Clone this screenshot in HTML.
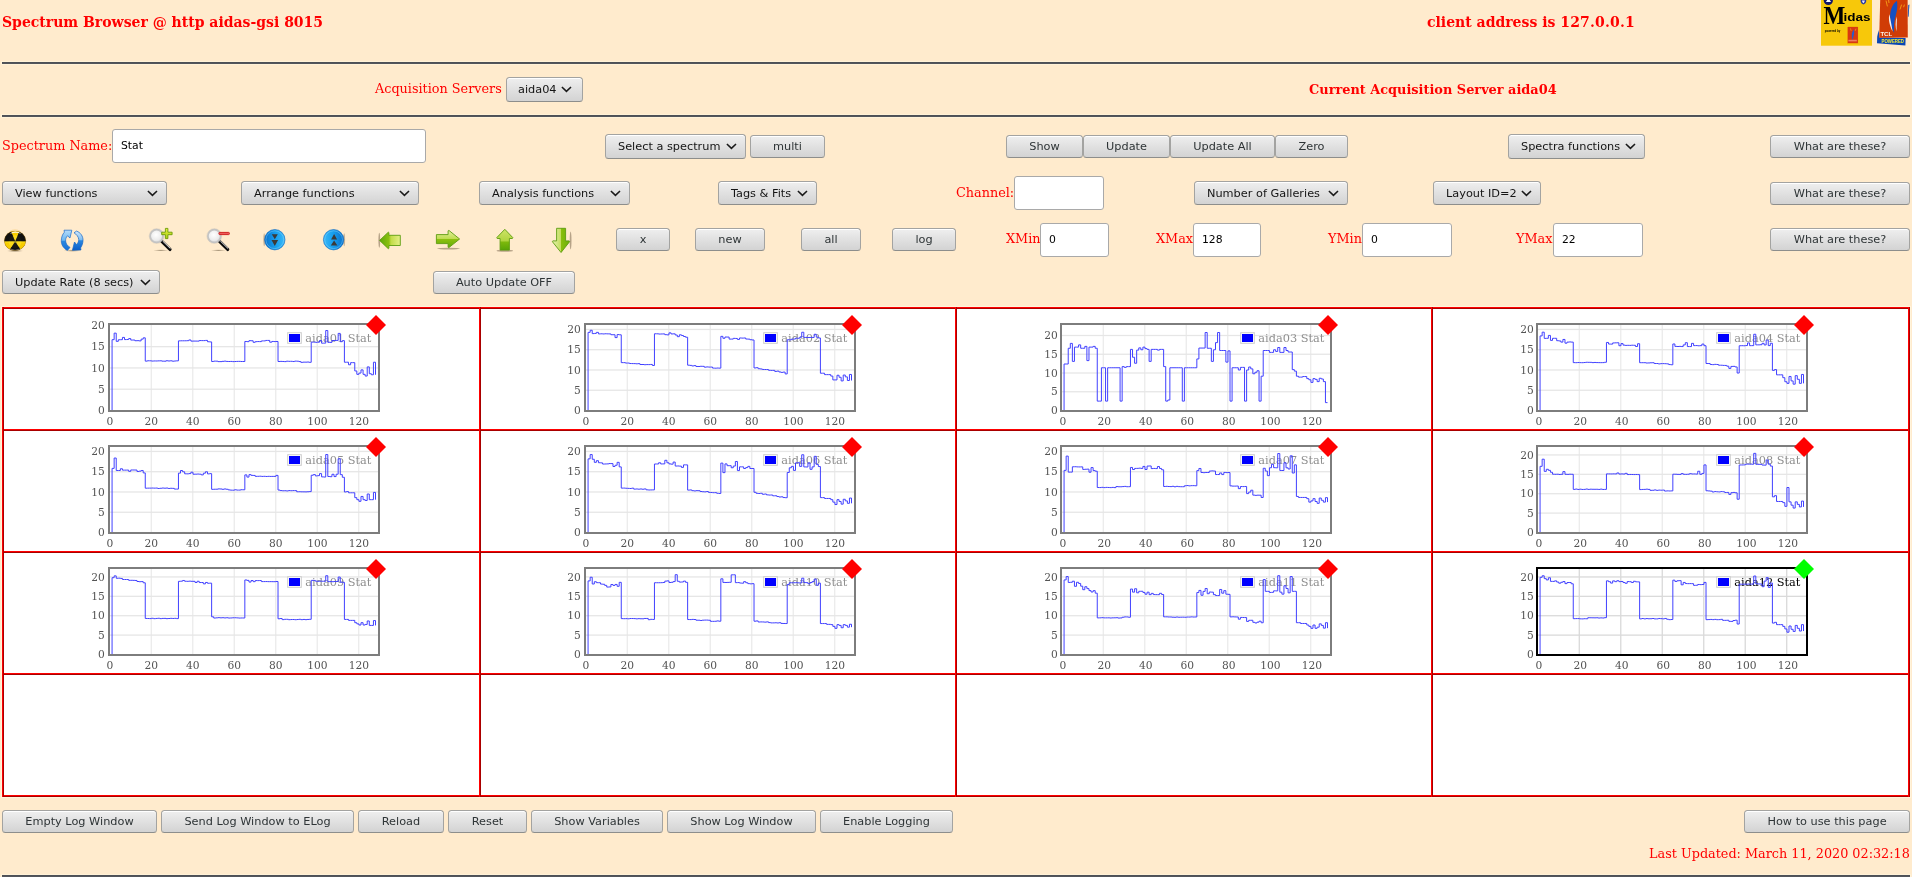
<!DOCTYPE html>
<html><head><meta charset="utf-8"><title>Spectrum Browser</title>
<style>
html,body{margin:0;padding:0}
body{width:1912px;height:877px;overflow:hidden;background:#ffebcd;position:relative;font-family:"DejaVu Serif","Liberation Serif",serif;color:#ff0000;font-size:12.8px}
.a{position:absolute;white-space:nowrap}
.t{position:absolute;white-space:nowrap;line-height:16px;height:16px;will-change:transform}
.h{font-weight:bold;font-size:14px}
.b{font-weight:bold;font-size:12.9px}
.hr{position:absolute;left:2px;width:1908px;height:2px;background:linear-gradient(#4b4e53,#55585e);box-shadow:0 0 0 1px #fff2d8}
.btn,.sel{position:absolute;box-sizing:border-box;border:1px solid #a3a3a1;border-bottom-color:#8d8e8c;border-radius:3.5px;background:linear-gradient(#efefef,#e2e2e2 45%,#d3d3d3);box-shadow:inset 0 1px 0 #ffffff;font-family:"DejaVu Sans","Liberation Sans",sans-serif;font-size:11.3px;text-align:center;white-space:nowrap}
.btn{color:#2e3436}
.sel{color:#141414;text-align:left;font-size:11.3px}
.btn span,.sel span{position:absolute;left:0;right:0;top:50%;margin-top:-8px;line-height:16px;height:16px;will-change:transform}
.sel span{left:12px}
.sel svg{position:absolute;top:50%;margin-top:-3.5px}
.inp{position:absolute;box-sizing:border-box;border:1px solid #a9a9a9;border-radius:3px;background:#fff;font-family:"DejaVu Sans","Liberation Sans",sans-serif;font-size:10.8px;color:#000}
.inp span{position:absolute;left:8px;top:50%;margin-top:-8px;line-height:16px;will-change:transform}
.grid{position:absolute;left:2px;top:307px;width:1908px;height:490px;background:#fff}
.vl{position:absolute;top:307px;height:490px;width:2px;background:linear-gradient(90deg,#ff0000 50%,#a80000 50%)}
.hl{position:absolute;left:2px;width:1908px;height:2px;background:linear-gradient(#ff0000 50%,#a80000 50%)}
svg text{font-family:"DejaVu Serif","Liberation Serif",serif}
svg.a{will-change:transform}
</style></head>
<body>
<div class="t h" style="left:2px;top:13.70px">Spectrum Browser @ http aidas-gsi 8015</div>
<div class="t h" style="left:1427px;top:13.70px">client address is <span style="letter-spacing:.18px">127.0.0.1</span></div>
<svg class="a" style="left:1816px;top:0" width="96" height="48" viewBox="1816 0 96 48"><rect x="1821" y="0" width="51" height="45.7" fill="#f7c80a"/><circle cx="1828.3" cy="0.4" r="4.6" fill="#14186a"/><path d="M1825.9 2 L1828.5 -2 L1831 2 Z" fill="#fff"/><path d="M1860.6 0 h5.6 q0.4 3.2 -2.8 4.6 q-3.2 -1.4 -2.8 -4.6Z" fill="#2a3aa0"/><path d="M1862 0.6 h2.8 q0 1.8 -1.4 2.6 q-1.4 -0.8 -1.4 -2.6Z" fill="#e8e8f8"/><text x="1823.4" y="23.6" style="font-family:'Liberation Serif','DejaVu Serif',serif"  font-weight="bold" font-size="25.4" fill="#000" textLength="21.8" lengthAdjust="spacingAndGlyphs">M</text><text x="1843.5" y="20.6" style="font-family:'Liberation Sans','DejaVu Sans',sans-serif"  font-weight="bold" font-size="10.5" fill="#000" textLength="27" lengthAdjust="spacingAndGlyphs">idas</text><text x="1824.8" y="31.8" style="font-family:'Liberation Sans','DejaVu Sans',sans-serif"  font-weight="bold" font-size="3.4" fill="#000" textLength="15.5" lengthAdjust="spacingAndGlyphs">powered by</text><rect x="1847.2" y="26.6" width="11" height="17" fill="#d83a10" stroke="#f8e000" stroke-width="0.5"/><path d="M1853.6 29.4 q-2.2 3 -1.8 7.4 q0.2 2 1 3.4 q0.2 -3 1.2 -5.6 q0.8 -2.6 -0.4 -5.2Z" fill="#2a5ac8"/><path d="M1850.4 28.4 l0.8 2.4 M1856 28.6 l-0.8 2.2" stroke="#f8b020" stroke-width="0.6"/><rect x="1848.4" y="39.8" width="8.4" height="1.6" fill="#f08060"/><path d="M1877.2 36.8 L1878.6 30 L1879.4 37.6 L1905.6 38 L1905.4 45.4 L1877 43.2 Z" fill="#0a46b4"/><path d="M1880.2 0 L1907.6 0 L1907.8 37.6 L1879.2 37.8 Z" fill="#d03c06"/><path d="M1908.3 5 L1909.4 4.4 L1908.6 16.6 L1907.9 17 Z" fill="#0a46b4"/><path d="M1897 0.8 C1891.8 4.4 1889.6 11.6 1890.2 19.6 C1890.4 25.2 1892.6 29.4 1894.2 33.2 C1893.6 26 1894.2 20.4 1896 14.4 C1897.4 10 1897.6 5.2 1897 0.8 Z" fill="#1450c4"/><path d="M1889.4 14.2 C1888.2 19 1889.4 25 1892.6 31.6 L1891.4 24.6 Z M1896.6 16.4 C1895.2 21.4 1895.4 27.6 1896.6 31.6 C1896.4 26 1897.2 20.6 1896.6 16.4Z" fill="#f4f0f0"/><path d="M1886 0.6 L1887.4 6.4 M1888.6 0 L1889 3 M1901.6 4.6 L1900 9.4 M1904.4 4.6 L1903.6 7.2" stroke="#f6a018" stroke-width="0.9" fill="none"/><text x="1880.4" y="35.6" style="font-family:'Liberation Sans','DejaVu Sans',sans-serif"  font-weight="bold" font-size="5.2" fill="#fcf4ec" textLength="11.8" lengthAdjust="spacingAndGlyphs">TCL</text><text x="1881.6" y="43.2" style="font-family:'Liberation Sans','DejaVu Sans',sans-serif"  font-weight="bold" font-size="4.6" fill="#f4ec30" textLength="22.4" lengthAdjust="spacingAndGlyphs">POWERED</text></svg>
<div class="hr" style="top:62px"></div>
<div class="t " style="left:375px;top:81.20px">Acquisition Servers</div>
<div class="sel" style="left:506px;top:77px;width:77px;height:25px"><span style="margin-top:-8px;left:11px">aida04</span><svg style="left:54.300000000000004px;margin-top:-3.5px" width="11" height="7" viewBox="0 0 11 7"><path d="M0.9 1 L5.45 5.4 L10 1" fill="none" stroke="#1a1a1a" stroke-width="1.55"/></svg></div>
<div class="t b" style="left:1309.2px;top:81.70px">Current Acquisition Server aida04</div>
<div class="hr" style="top:115px"></div>
<div class="t " style="left:2px;top:137.70px">Spectrum Name:</div>
<div class="inp" style="left:112px;top:129px;width:314px;height:34px"><span>Stat</span></div>
<div class="sel" style="left:605px;top:134px;width:141px;height:25px"><span style="margin-top:-8px;left:12px">Select a spectrum</span><svg style="left:119.7px;margin-top:-3.5px" width="11" height="7" viewBox="0 0 11 7"><path d="M0.9 1 L5.45 5.4 L10 1" fill="none" stroke="#1a1a1a" stroke-width="1.55"/></svg></div>
<div class="btn" style="left:750px;top:135px;width:75px;height:23px"><span>multi</span></div>
<div class="btn" style="left:1006px;top:135px;width:77px;height:23px"><span>Show</span></div>
<div class="btn" style="left:1083px;top:135px;width:87px;height:23px"><span>Update</span></div>
<div class="btn" style="left:1170px;top:135px;width:105px;height:23px"><span>Update All</span></div>
<div class="btn" style="left:1275px;top:135px;width:73px;height:23px"><span>Zero</span></div>
<div class="sel" style="left:1508px;top:134px;width:137px;height:25px"><span style="margin-top:-8px;left:12px">Spectra functions</span><svg style="left:115.7px;margin-top:-3.5px" width="11" height="7" viewBox="0 0 11 7"><path d="M0.9 1 L5.45 5.4 L10 1" fill="none" stroke="#1a1a1a" stroke-width="1.55"/></svg></div>
<div class="btn" style="left:1770px;top:135px;width:140px;height:23px"><span>What are these?</span></div>
<div class="sel" style="left:2px;top:181px;width:165px;height:24px"><span style="margin-top:-7px;left:12px">View functions</span><svg style="left:143.7px;margin-top:-3.0px" width="11" height="7" viewBox="0 0 11 7"><path d="M0.9 1 L5.45 5.4 L10 1" fill="none" stroke="#1a1a1a" stroke-width="1.55"/></svg></div>
<div class="sel" style="left:241px;top:181px;width:178px;height:24px"><span style="margin-top:-7px;left:12px">Arrange functions</span><svg style="left:156.7px;margin-top:-3.0px" width="11" height="7" viewBox="0 0 11 7"><path d="M0.9 1 L5.45 5.4 L10 1" fill="none" stroke="#1a1a1a" stroke-width="1.55"/></svg></div>
<div class="sel" style="left:479px;top:181px;width:151px;height:24px"><span style="margin-top:-7px;left:12px">Analysis functions</span><svg style="left:129.7px;margin-top:-3.0px" width="11" height="7" viewBox="0 0 11 7"><path d="M0.9 1 L5.45 5.4 L10 1" fill="none" stroke="#1a1a1a" stroke-width="1.55"/></svg></div>
<div class="sel" style="left:718px;top:181px;width:99px;height:24px"><span style="margin-top:-7px;left:12px">Tags &amp; Fits</span><svg style="left:77.7px;margin-top:-3.0px" width="11" height="7" viewBox="0 0 11 7"><path d="M0.9 1 L5.45 5.4 L10 1" fill="none" stroke="#1a1a1a" stroke-width="1.55"/></svg></div>
<div class="t " style="left:956px;top:184.70px">Channel:</div>
<div class="inp" style="left:1014px;top:176px;width:90px;height:34px"><span></span></div>
<div class="sel" style="left:1194px;top:181px;width:154px;height:24px"><span style="margin-top:-7px;left:12px">Number of Galleries</span><svg style="left:132.7px;margin-top:-3.0px" width="11" height="7" viewBox="0 0 11 7"><path d="M0.9 1 L5.45 5.4 L10 1" fill="none" stroke="#1a1a1a" stroke-width="1.55"/></svg></div>
<div class="sel" style="left:1433px;top:181px;width:108px;height:24px"><span style="margin-top:-7px;left:12px">Layout ID=2</span><svg style="left:86.7px;margin-top:-3.0px" width="11" height="7" viewBox="0 0 11 7"><path d="M0.9 1 L5.45 5.4 L10 1" fill="none" stroke="#1a1a1a" stroke-width="1.55"/></svg></div>
<div class="btn" style="left:1770px;top:182px;width:140px;height:23px"><span>What are these?</span></div>
<svg class="a" style="left:0;top:224px" width="582" height="36" viewBox="0 224 582 36"><defs>
<radialGradient id="gy" cx="0.5" cy="0.45" r="0.6"><stop offset="0" stop-color="#ffe53a"/><stop offset="0.6" stop-color="#f5c400"/><stop offset="1" stop-color="#d89a00"/></radialGradient>
<radialGradient id="gk" cx="0.5" cy="0.5" r="0.55"><stop offset="0" stop-color="#3a3a30"/><stop offset="0.7" stop-color="#0c0c0c"/><stop offset="1" stop-color="#000"/></radialGradient>
<linearGradient id="gshine" x1="0" y1="0" x2="0" y2="1"><stop offset="0" stop-color="#fff" stop-opacity="0.75"/><stop offset="1" stop-color="#fff" stop-opacity="0"/></linearGradient>
<radialGradient id="gsh" cx="0.5" cy="0.5" r="0.5"><stop offset="0" stop-color="#3a2a10" stop-opacity="0.45"/><stop offset="1" stop-color="#3a2a10" stop-opacity="0"/></radialGradient>
<linearGradient id="gb1" x1="0" y1="0" x2="0" y2="1"><stop offset="0" stop-color="#b4dcfa"/><stop offset="0.5" stop-color="#6cb6f0"/><stop offset="0.54" stop-color="#2a88e0"/><stop offset="1" stop-color="#1a70d4"/></linearGradient>
<linearGradient id="gb2" x1="0" y1="0" x2="0" y2="1"><stop offset="0" stop-color="#d0e8fc"/><stop offset="0.46" stop-color="#7cbcf2"/><stop offset="0.5" stop-color="#2a88e0"/><stop offset="1" stop-color="#0a5cc8"/></linearGradient>
<radialGradient id="glens" cx="0.45" cy="0.4" r="0.6"><stop offset="0" stop-color="#ffffff"/><stop offset="0.7" stop-color="#ececec"/><stop offset="1" stop-color="#d6d6d6"/></radialGradient>
<linearGradient id="gcd" x1="0" y1="0" x2="1" y2="0"><stop offset="0" stop-color="#0870cc"/><stop offset="0.55" stop-color="#18a0ee"/><stop offset="1" stop-color="#3ab8f8"/></linearGradient>
<linearGradient id="gcu" x1="0" y1="0" x2="1" y2="0"><stop offset="0" stop-color="#3ab8f8"/><stop offset="0.45" stop-color="#18a0ee"/><stop offset="1" stop-color="#0870cc"/></linearGradient>
<linearGradient id="gal" x1="0" y1="0" x2="1" y2="0"><stop offset="0" stop-color="#5ea808"/><stop offset="0.45" stop-color="#8cc010"/><stop offset="0.55" stop-color="#c2dc48"/><stop offset="1" stop-color="#e4f088"/></linearGradient>
<linearGradient id="gar" x1="0" y1="0" x2="0" y2="1"><stop offset="0" stop-color="#e2f0a0"/><stop offset="0.48" stop-color="#c0dc50"/><stop offset="0.52" stop-color="#8cc010"/><stop offset="1" stop-color="#62aa08"/></linearGradient>
<linearGradient id="gau" x1="0" y1="0" x2="0" y2="1"><stop offset="0" stop-color="#cfe468"/><stop offset="0.55" stop-color="#b0d440"/><stop offset="0.62" stop-color="#7cb80c"/><stop offset="1" stop-color="#58a406"/></linearGradient>
<linearGradient id="gad" x1="0" y1="0" x2="1" y2="0"><stop offset="0" stop-color="#e6f2b0"/><stop offset="0.48" stop-color="#c4de60"/><stop offset="0.52" stop-color="#88be0c"/><stop offset="1" stop-color="#6cb008"/></linearGradient>
<linearGradient id="gplus" x1="0" y1="0" x2="0" y2="1"><stop offset="0" stop-color="#e8f040"/><stop offset="1" stop-color="#a8cc10"/></linearGradient>
</defs><clipPath id="radclip"><ellipse cx="15.05" cy="240.75" rx="10.7" ry="9.85"/></clipPath><ellipse cx="15.05" cy="250.95" rx="8.6" ry="1.3" fill="url(#gsh)"/><g clip-path="url(#radclip)"><rect x="4" y="229" width="23" height="23" fill="#0e0e0c"/><ellipse cx="15.05" cy="239.75" rx="8" ry="6" fill="#34342a" opacity="0.6"/><path d="M15.2 241.5 L26.92 213.88 L15.20 211.50 L3.48 213.88 Z" fill="#f7cc00"/><path d="M15.2 241.5 L-14.80 241.50 L-11.16 255.81 L-1.14 266.66 Z" fill="#f7cc00"/><path d="M15.2 241.5 L31.54 266.66 L41.56 255.81 L45.20 241.50 Z" fill="#f7cc00"/><ellipse cx="15.05" cy="241.75" rx="6.5" ry="6.5" fill="#ffe838" opacity="0.5"/><path d="M15.2 241.5 L26.92 213.88 L15.20 211.50 L3.48 213.88 Z" fill="none"/><path d="M15.2 241.5 L45.20 241.50 L40.22 224.94 L26.92 213.88 Z" fill="#101010" opacity="0.93"/><path d="M15.2 241.5 L3.48 213.88 L-9.82 224.94 L-14.80 241.50 Z" fill="#101010" opacity="0.93"/><path d="M15.2 241.5 L-1.14 266.66 L15.20 271.50 L31.54 266.66 Z" fill="#101010" opacity="0.93"/><rect x="4.050000000000001" y="241.45" width="22" height="1.0" fill="#ffe21a" opacity="0.95"/><path d="M13.799999999999999 241.5 h2.8 v1.0 h-2.8 Z" fill="#5a5a3a" opacity="0.7"/><path d="M9.8 234.0 A7.25 7.25 0 0 1 21.3 234.0 A14 14 0 0 0 9.8 234.0Z" fill="#fff" opacity="0.85"/><path d="M10.05 248.95 A9.6 9.2 0 0 0 20.05 248.95" fill="none" stroke="#c8c8d0" stroke-opacity="0.5" stroke-width="0.9"/></g><ellipse cx="15.05" cy="240.75" rx="10.7" ry="9.85" fill="none" stroke="#c88a00" stroke-opacity="0.5" stroke-width="0.6"/><path d="M9.6 231.5 A10.6 10.6 0 0 1 20.6 231.5" fill="none" stroke="#f0b020" stroke-opacity="0.55" stroke-width="0.5"/><ellipse cx="72.5" cy="250.6" rx="9" ry="1.3" fill="url(#gsh)"/><path d="M64.0 230.2 L71.8 230.2 L70.0 238.0 L67.5 235.8 C65.9 237.4 65.5 239.4 65.6 241.0 C65.8 243.8 67.6 246.0 70.0 247.4 L67.4 250.4 C63.6 248.4 61.2 244.8 61.3 240.7 C61.4 237.2 62.4 234.4 64.4 232.2 Z" fill="url(#gb1)" stroke="#1868c8" stroke-width="0.7" stroke-linejoin="round"/><path d="M76.5 231.1 C80.5 232.4 83.1 236.2 83.0 240.4 C82.9 243.4 82.0 245.8 80.6 247.9 L81.0 249.9 L72.4 250.3 L74.5 242.0 L76.4 244.5 C78.0 243.2 78.8 241.4 78.75 239.7 C78.6 236.8 76.6 234.4 74.0 232.8 Z" fill="url(#gb2)" stroke="#1464c4" stroke-width="0.7" stroke-linejoin="round"/><ellipse cx="160.79999999999998" cy="250.4" rx="7.5" ry="1.1" fill="url(#gsh)"/><path d="M161.79999999999998 241.45000000000002 L170.0 249.45000000000002" stroke="#0a0a0a" stroke-width="3.2" stroke-linecap="round"/><path d="M162.9 241.25 L170.2 248.35000000000002" stroke="#f4f4f4" stroke-width="1.0" stroke-linecap="round"/><circle cx="156.6" cy="236.05" r="6.4" fill="url(#glens)" stroke="#c4c4c4" stroke-width="1.7"/><circle cx="156.6" cy="236.05" r="7.4" fill="none" stroke="#b0b0b0" stroke-opacity="0.6" stroke-width="0.5"/><path d="M165.4 228.4 h2.5 v3.8 h4.2 v2.5 h-4.2 v3.9 h-2.5 v-3.9 h-3.7 v-2.5 h3.7 Z" fill="url(#gplus)" stroke="#6a9c08" stroke-width="0.9" stroke-linejoin="round"/><ellipse cx="218.5" cy="250.4" rx="7.5" ry="1.1" fill="url(#gsh)"/><path d="M219.5 241.45000000000002 L227.70000000000002 249.45000000000002" stroke="#0a0a0a" stroke-width="3.2" stroke-linecap="round"/><path d="M220.60000000000002 241.25 L227.9 248.35000000000002" stroke="#f4f4f4" stroke-width="1.0" stroke-linecap="round"/><circle cx="214.3" cy="236.05" r="6.4" fill="url(#glens)" stroke="#c4c4c4" stroke-width="1.7"/><circle cx="214.3" cy="236.05" r="7.4" fill="none" stroke="#b0b0b0" stroke-opacity="0.6" stroke-width="0.5"/><rect x="218.9" y="232.4" width="10.5" height="2.2" rx="0.8" fill="#ee5a5a" stroke="#cc1414" stroke-width="0.9"/><ellipse cx="264.2" cy="239.7" rx="0.9" ry="6.5" fill="#4a3820" fill-opacity="0.32"/><circle cx="274.8" cy="239.7" r="10.2" fill="url(#gcd)" stroke="#0a64c0" stroke-width="0.6"/><circle cx="274.8" cy="239.7" r="8.9" fill="none" stroke="#8edcff" stroke-opacity="0.6" stroke-width="0.7"/><path d="M271.8 234.29999999999998 h6 l-3 4.9 Z M271.5 240.0 h6.6 l-3.3 6.1 Z" fill="#3c3a38"/><ellipse cx="344.20000000000005" cy="239.7" rx="0.9" ry="6.5" fill="#4a3820" fill-opacity="0.32"/><circle cx="333.6" cy="239.7" r="10.2" fill="url(#gcu)" stroke="#0a64c0" stroke-width="0.6"/><circle cx="333.6" cy="239.7" r="8.9" fill="none" stroke="#8edcff" stroke-opacity="0.6" stroke-width="0.7"/><path d="M334.1 234.0 l3 5.6 h-6 Z M334.1 240.6 l3.3 5 h-6.6 Z" fill="#3c3a38"/><ellipse cx="379.3" cy="240.3" rx="0.9" ry="7.5" fill="#4a3820" fill-opacity="0.4"/><path d="M379.6 240.4 L388.3 232.2 L388.9 232.6 L388.9 235.3 L400.3 235.3 L400.3 245.5 L388.9 245.5 L388.9 248.3 L388.3 248.7 Z" fill="url(#gal)" stroke="#5c9c10" stroke-width="0.9" stroke-linejoin="round"/><ellipse cx="448.5" cy="248.6" rx="11.5" ry="0.9" fill="#4a3820" fill-opacity="0.4"/><path d="M459.6 239.0 L448.9 230.4 L448.1 230.8 L448.1 234.6 L436.4 234.6 L436.4 243.6 L448.1 243.6 L448.1 247.2 L448.9 247.6 Z" fill="url(#gar)" stroke="#5c9c10" stroke-width="0.9" stroke-linejoin="round"/><ellipse cx="504.8" cy="250.7" rx="8.3" ry="1.0" fill="#4a3820" fill-opacity="0.4"/><path d="M504.8 229.3 L496.8 237.6 L497.2 238.5 L500.1 238.5 L500.1 250.1 L509.4 250.1 L509.4 238.5 L512.4 238.5 L512.8 237.6 Z" fill="url(#gau)" stroke="#5c9c10" stroke-width="0.9" stroke-linejoin="round"/><ellipse cx="570.6" cy="240.5" rx="0.9" ry="9" fill="#4a3820" fill-opacity="0.4"/><path d="M561.05 252.5 L552.4 241.7 L552.8 240.9 L556.6 240.9 L556.6 228.3 L565.6 228.3 L565.6 240.9 L569.2 240.9 L569.6 241.7 Z" fill="url(#gad)" stroke="#5c9c10" stroke-width="0.9" stroke-linejoin="round"/></svg>
<div class="btn" style="left:616px;top:228px;width:54px;height:23px"><span>x</span></div>
<div class="btn" style="left:695px;top:228px;width:70px;height:23px"><span>new</span></div>
<div class="btn" style="left:801px;top:228px;width:60px;height:23px"><span>all</span></div>
<div class="btn" style="left:892px;top:228px;width:64px;height:23px"><span>log</span></div>
<div class="t " style="left:1006px;top:231.20px">XMin</div>
<div class="inp" style="left:1040px;top:223px;width:69px;height:34px"><span>0</span></div>
<div class="t " style="left:1156px;top:231.20px">XMax</div>
<div class="inp" style="left:1193px;top:223px;width:68px;height:34px"><span>128</span></div>
<div class="t " style="left:1328px;top:231.20px">YMin</div>
<div class="inp" style="left:1362px;top:223px;width:90px;height:34px"><span>0</span></div>
<div class="t " style="left:1516px;top:231.20px">YMax</div>
<div class="inp" style="left:1553px;top:223px;width:90px;height:34px"><span>22</span></div>
<div class="btn" style="left:1770px;top:228px;width:140px;height:23px"><span>What are these?</span></div>
<div class="sel" style="left:2px;top:270px;width:158px;height:24px"><span style="margin-top:-7px;left:12px">Update Rate (8 secs)</span><svg style="left:136.7px;margin-top:-3.0px" width="11" height="7" viewBox="0 0 11 7"><path d="M0.9 1 L5.45 5.4 L10 1" fill="none" stroke="#1a1a1a" stroke-width="1.55"/></svg></div>
<div class="btn" style="left:433px;top:271px;width:142px;height:23px"><span>Auto Update OFF</span></div>
<div class="grid"></div>
<div class="a" style="left:1px;top:306px;width:1908px;height:490px;border:1px solid #fff4dc"></div>
<div class="hl" style="top:307px"></div>
<div class="hl" style="top:429px"></div>
<div class="hl" style="top:551px"></div>
<div class="hl" style="top:673px"></div>
<div class="hl" style="top:795px"></div>
<div class="vl" style="left:2px"></div>
<div class="vl" style="left:479px"></div>
<div class="vl" style="left:955px"></div>
<div class="vl" style="left:1431px"></div>
<div class="vl" style="left:1908px"></div>
<svg class="a" style="left:80px;top:311px" width="312" height="119" viewBox="80 311 312 119"><rect x="150.64" y="325" width="1.3" height="85.0" fill="#ebebeb"/><rect x="192.12" y="325" width="1.3" height="85.0" fill="#ebebeb"/><rect x="233.61" y="325" width="1.3" height="85.0" fill="#ebebeb"/><rect x="275.09" y="325" width="1.3" height="85.0" fill="#ebebeb"/><rect x="316.58" y="325" width="1.3" height="85.0" fill="#ebebeb"/><rect x="358.07" y="325" width="1.3" height="85.0" fill="#ebebeb"/><rect x="110" y="388.58" width="268.0" height="1.3" fill="#e6e6e6"/><rect x="110" y="367.31" width="268.0" height="1.3" fill="#e6e6e6"/><rect x="110" y="346.04" width="268.0" height="1.3" fill="#e6e6e6"/><rect x="287.70" y="332.70" width="13.6" height="10.6" fill="#fff" stroke="#ccc" stroke-width="1"/><rect x="289.00" y="334.00" width="11" height="8" fill="#0000ff"/><text x="371.40" y="341.60" font-size="11.35" fill="#8f8f8f" text-anchor="end">aida01 Stat</text><path d="M110.00 410.50 L112.07 410.50 L112.07 339.68 L114.15 339.68 L114.15 333.15 L116.22 333.15 L116.22 341.34 L118.30 341.34 L118.30 339.75 L120.37 339.75 L120.37 339.68 L122.45 339.68 L122.45 337.41 L124.52 337.41 L124.52 339.59 L126.59 339.59 L126.59 339.52 L128.67 339.52 L128.67 338.56 L130.74 338.56 L130.74 340.05 L132.82 340.05 L132.82 340.03 L134.89 340.03 L134.89 340.73 L136.97 340.73 L136.97 340.68 L139.04 340.68 L139.04 340.88 L141.11 340.88 L141.11 339.13 L143.19 339.13 L143.19 337.83 L145.26 337.83 L145.26 361.13 L147.34 361.13 L147.34 360.77 L149.41 360.77 L149.41 360.81 L151.49 360.81 L151.49 361.07 L153.56 361.07 L153.56 360.95 L155.63 360.95 L155.63 360.97 L157.71 360.97 L157.71 360.87 L159.78 360.87 L159.78 360.80 L161.86 360.80 L161.86 361.15 L163.93 361.15 L163.93 361.18 L166.01 361.18 L166.01 360.77 L168.08 360.77 L168.08 360.98 L170.15 360.98 L170.15 360.81 L172.23 360.81 L172.23 361.20 L174.30 361.20 L174.30 360.97 L176.38 360.97 L176.38 360.83 L178.45 360.83 L178.45 340.87 L180.53 340.87 L180.53 340.79 L182.60 340.79 L182.60 340.79 L184.67 340.79 L184.67 340.78 L186.75 340.78 L186.75 340.70 L188.82 340.70 L188.82 339.96 L190.90 339.96 L190.90 341.11 L192.97 341.11 L192.97 341.07 L195.05 341.07 L195.05 341.08 L197.12 341.08 L197.12 341.12 L199.20 341.12 L199.20 340.55 L201.27 340.55 L201.27 340.61 L203.34 340.61 L203.34 340.60 L205.42 340.60 L205.42 340.40 L207.49 340.40 L207.49 341.74 L209.57 341.74 L209.57 341.92 L211.64 341.92 L211.64 361.51 L213.72 361.51 L213.72 361.14 L215.79 361.14 L215.79 361.16 L217.86 361.16 L217.86 361.61 L219.94 361.61 L219.94 361.61 L222.01 361.61 L222.01 361.35 L224.09 361.35 L224.09 361.15 L226.16 361.15 L226.16 361.43 L228.24 361.43 L228.24 361.51 L230.31 361.51 L230.31 361.41 L232.38 361.41 L232.38 361.61 L234.46 361.61 L234.46 361.51 L236.53 361.51 L236.53 361.40 L238.61 361.40 L238.61 361.37 L240.68 361.37 L240.68 361.51 L242.76 361.51 L242.76 361.51 L244.83 361.51 L244.83 341.47 L246.90 341.47 L246.90 341.66 L248.98 341.66 L248.98 340.68 L251.05 340.68 L251.05 340.75 L253.13 340.75 L253.13 342.30 L255.20 342.30 L255.20 341.68 L257.28 341.68 L257.28 341.57 L259.35 341.57 L259.35 341.62 L261.42 341.62 L261.42 340.91 L263.50 340.91 L263.50 340.89 L265.57 340.89 L265.57 340.43 L267.65 340.43 L267.65 340.42 L269.72 340.42 L269.72 342.19 L271.80 342.19 L271.80 341.45 L273.87 341.45 L273.87 341.59 L275.94 341.59 L275.94 341.47 L278.02 341.47 L278.02 361.51 L280.09 361.51 L280.09 361.39 L282.17 361.39 L282.17 361.48 L284.24 361.48 L284.24 361.61 L286.32 361.61 L286.32 361.20 L288.39 361.20 L288.39 361.34 L290.46 361.34 L290.46 361.30 L292.54 361.30 L292.54 361.53 L294.61 361.53 L294.61 361.12 L296.69 361.12 L296.69 361.19 L298.76 361.19 L298.76 361.56 L300.84 361.56 L300.84 362.35 L302.91 362.35 L302.91 362.15 L304.98 362.15 L304.98 362.15 L307.06 362.15 L307.06 362.04 L309.13 362.04 L309.13 362.30 L311.21 362.30 L311.21 342.13 L313.28 342.13 L313.28 342.13 L315.36 342.13 L315.36 342.34 L317.43 342.34 L317.43 342.21 L319.50 342.21 L319.50 340.52 L321.58 340.52 L321.58 343.20 L323.65 343.20 L323.65 343.12 L325.73 343.12 L325.73 330.52 L327.80 330.52 L327.80 342.37 L329.88 342.37 L329.88 342.37 L331.95 342.37 L331.95 340.50 L334.02 340.50 L334.02 340.55 L336.10 340.55 L336.10 340.38 L338.17 340.38 L338.17 333.40 L340.25 333.40 L340.25 341.70 L342.32 341.70 L342.32 340.65 L344.40 340.65 L344.40 362.22 L346.47 362.22 L346.47 362.22 L348.54 362.22 L348.54 364.77 L350.62 364.77 L350.62 362.65 L352.69 362.65 L352.69 362.65 L354.77 362.65 L354.77 370.94 L356.84 370.94 L356.84 374.34 L358.92 374.34 L358.92 373.07 L360.99 373.07 L360.99 369.88 L363.07 369.88 L363.07 374.34 L365.14 374.34 L365.14 376.04 L367.21 376.04 L367.21 366.90 L369.29 366.90 L369.29 373.71 L371.36 373.71 L371.36 374.77 L373.44 374.77 L373.44 362.22 L375.51 362.22 L375.51 374.77" fill="none" stroke="#4040ff" stroke-width="1.0" stroke-linejoin="round"/><rect x="109" y="324" width="270.0" height="87.0" fill="none" stroke="#7d7d7d" stroke-width="2"/><text x="109.90" y="424.90" font-size="10.67" fill="#545454" text-anchor="middle">0</text><text x="151.39" y="424.90" font-size="10.67" fill="#545454" text-anchor="middle">20</text><text x="192.87" y="424.90" font-size="10.67" fill="#545454" text-anchor="middle">40</text><text x="234.36" y="424.90" font-size="10.67" fill="#545454" text-anchor="middle">60</text><text x="275.84" y="424.90" font-size="10.67" fill="#545454" text-anchor="middle">80</text><text x="317.33" y="424.90" font-size="10.67" fill="#545454" text-anchor="middle">100</text><text x="358.82" y="424.90" font-size="10.67" fill="#545454" text-anchor="middle">120</text><text x="104.70" y="414.20" font-size="10.67" fill="#545454" text-anchor="end">0</text><text x="104.70" y="392.93" font-size="10.67" fill="#545454" text-anchor="end">5</text><text x="104.70" y="371.66" font-size="10.67" fill="#545454" text-anchor="end">10</text><text x="104.70" y="350.39" font-size="10.67" fill="#545454" text-anchor="end">15</text><text x="104.70" y="329.13" font-size="10.67" fill="#545454" text-anchor="end">20</text><path d="M366 325 L376 315 L386 325 L376 335 Z" fill="#ff0000"/></svg>
<svg class="a" style="left:556px;top:311px" width="312" height="119" viewBox="556 311 312 119"><rect x="626.64" y="325" width="1.3" height="85.0" fill="#ebebeb"/><rect x="668.12" y="325" width="1.3" height="85.0" fill="#ebebeb"/><rect x="709.61" y="325" width="1.3" height="85.0" fill="#ebebeb"/><rect x="751.09" y="325" width="1.3" height="85.0" fill="#ebebeb"/><rect x="792.58" y="325" width="1.3" height="85.0" fill="#ebebeb"/><rect x="834.07" y="325" width="1.3" height="85.0" fill="#ebebeb"/><rect x="586" y="389.59" width="268.0" height="1.3" fill="#e6e6e6"/><rect x="586" y="369.33" width="268.0" height="1.3" fill="#e6e6e6"/><rect x="586" y="349.07" width="268.0" height="1.3" fill="#e6e6e6"/><rect x="586" y="328.81" width="268.0" height="1.3" fill="#e6e6e6"/><rect x="763.70" y="332.70" width="13.6" height="10.6" fill="#fff" stroke="#ccc" stroke-width="1"/><rect x="765.00" y="334.00" width="11" height="8" fill="#0000ff"/><text x="847.40" y="341.60" font-size="11.35" fill="#8f8f8f" text-anchor="end">aida02 Stat</text><path d="M586.00 410.50 L588.07 410.50 L588.07 332.37 L590.15 332.37 L590.15 330.27 L592.22 330.27 L592.22 333.61 L594.30 333.61 L594.30 333.42 L596.37 333.42 L596.37 332.37 L598.45 332.37 L598.45 333.90 L600.52 333.90 L600.52 333.79 L602.59 333.79 L602.59 333.94 L604.67 333.94 L604.67 333.78 L606.74 333.78 L606.74 333.85 L608.82 333.85 L608.82 333.90 L610.89 333.90 L610.89 334.73 L612.97 334.73 L612.97 334.74 L615.04 334.74 L615.04 337.60 L617.11 337.60 L617.11 334.58 L619.19 334.58 L619.19 334.79 L621.26 334.79 L621.26 362.63 L623.34 362.63 L623.34 362.63 L625.41 362.63 L625.41 363.06 L627.49 363.06 L627.49 363.05 L629.56 363.05 L629.56 363.53 L631.63 363.53 L631.63 363.58 L633.71 363.58 L633.71 363.62 L635.78 363.62 L635.78 363.79 L637.86 363.79 L637.86 363.65 L639.93 363.65 L639.93 364.50 L642.01 364.50 L642.01 364.51 L644.08 364.51 L644.08 364.71 L646.15 364.71 L646.15 364.58 L648.23 364.58 L648.23 364.60 L650.30 364.60 L650.30 364.44 L652.38 364.44 L652.38 365.48 L654.45 365.48 L654.45 333.78 L656.53 333.78 L656.53 333.81 L658.60 333.81 L658.60 334.05 L660.67 334.05 L660.67 333.98 L662.75 333.98 L662.75 333.92 L664.82 333.92 L664.82 334.68 L666.90 334.68 L666.90 334.86 L668.97 334.86 L668.97 332.87 L671.05 332.87 L671.05 333.95 L673.12 333.95 L673.12 333.83 L675.20 333.83 L675.20 335.01 L677.27 335.01 L677.27 336.68 L679.34 336.68 L679.34 334.81 L681.42 334.81 L681.42 335.54 L683.49 335.54 L683.49 336.49 L685.57 336.49 L685.57 337.22 L687.64 337.22 L687.64 365.18 L689.72 365.18 L689.72 365.38 L691.79 365.38 L691.79 365.95 L693.86 365.95 L693.86 365.63 L695.94 365.63 L695.94 366.48 L698.01 366.48 L698.01 366.48 L700.09 366.48 L700.09 366.27 L702.16 366.27 L702.16 366.34 L704.24 366.34 L704.24 367.16 L706.31 367.16 L706.31 366.91 L708.38 366.91 L708.38 367.09 L710.46 367.09 L710.46 367.07 L712.53 367.07 L712.53 368.08 L714.61 368.08 L714.61 368.18 L716.68 368.18 L716.68 368.04 L718.76 368.04 L718.76 368.13 L720.83 368.13 L720.83 336.35 L722.90 336.35 L722.90 338.26 L724.98 338.26 L724.98 337.02 L727.05 337.02 L727.05 337.06 L729.13 337.06 L729.13 339.09 L731.20 339.09 L731.20 339.09 L733.28 339.09 L733.28 338.35 L735.35 338.35 L735.35 338.46 L737.42 338.46 L737.42 339.45 L739.50 339.45 L739.50 337.98 L741.57 337.98 L741.57 338.10 L743.65 338.10 L743.65 337.99 L745.72 337.99 L745.72 339.04 L747.80 339.04 L747.80 339.11 L749.87 339.11 L749.87 339.74 L751.94 339.74 L751.94 339.98 L754.02 339.98 L754.02 367.95 L756.09 367.95 L756.09 367.71 L758.17 367.71 L758.17 368.72 L760.24 368.72 L760.24 368.96 L762.32 368.96 L762.32 369.46 L764.39 369.46 L764.39 369.51 L766.46 369.51 L766.46 369.54 L768.54 369.54 L768.54 370.31 L770.61 370.31 L770.61 370.38 L772.69 370.38 L772.69 370.36 L774.76 370.36 L774.76 371.43 L776.84 371.43 L776.84 371.12 L778.91 371.12 L778.91 371.98 L780.98 371.98 L780.98 372.37 L783.06 372.37 L783.06 372.08 L785.13 372.08 L785.13 373.93 L787.21 373.93 L787.21 339.76 L789.28 339.76 L789.28 339.86 L791.36 339.86 L791.36 339.11 L793.43 339.11 L793.43 339.06 L795.50 339.06 L795.50 338.18 L797.58 338.18 L797.58 338.28 L799.65 338.28 L799.65 337.24 L801.73 337.24 L801.73 332.25 L803.80 332.25 L803.80 337.42 L805.88 337.42 L805.88 337.47 L807.95 337.47 L807.95 337.48 L810.02 337.48 L810.02 337.42 L812.10 337.42 L812.10 337.44 L814.17 337.44 L814.17 334.28 L816.25 334.28 L816.25 337.15 L818.32 337.15 L818.32 337.96 L820.40 337.96 L820.40 373.22 L822.47 373.22 L822.47 373.22 L824.54 373.22 L824.54 374.64 L826.62 374.64 L826.62 374.64 L828.69 374.64 L828.69 374.64 L830.77 374.64 L830.77 376.06 L832.84 376.06 L832.84 379.91 L834.92 379.91 L834.92 379.91 L836.99 379.91 L836.99 375.25 L839.07 375.25 L839.07 377.27 L841.14 377.27 L841.14 380.92 L843.21 380.92 L843.21 375.04 L845.29 375.04 L845.29 376.87 L847.36 376.87 L847.36 380.51 L849.44 380.51 L849.44 374.44 L851.51 374.44 L851.51 380.51" fill="none" stroke="#4040ff" stroke-width="1.0" stroke-linejoin="round"/><rect x="585" y="324" width="270.0" height="87.0" fill="none" stroke="#7d7d7d" stroke-width="2"/><text x="585.90" y="424.90" font-size="10.67" fill="#545454" text-anchor="middle">0</text><text x="627.39" y="424.90" font-size="10.67" fill="#545454" text-anchor="middle">20</text><text x="668.87" y="424.90" font-size="10.67" fill="#545454" text-anchor="middle">40</text><text x="710.36" y="424.90" font-size="10.67" fill="#545454" text-anchor="middle">60</text><text x="751.84" y="424.90" font-size="10.67" fill="#545454" text-anchor="middle">80</text><text x="793.33" y="424.90" font-size="10.67" fill="#545454" text-anchor="middle">100</text><text x="834.82" y="424.90" font-size="10.67" fill="#545454" text-anchor="middle">120</text><text x="580.70" y="414.20" font-size="10.67" fill="#545454" text-anchor="end">0</text><text x="580.70" y="393.94" font-size="10.67" fill="#545454" text-anchor="end">5</text><text x="580.70" y="373.68" font-size="10.67" fill="#545454" text-anchor="end">10</text><text x="580.70" y="353.42" font-size="10.67" fill="#545454" text-anchor="end">15</text><text x="580.70" y="333.16" font-size="10.67" fill="#545454" text-anchor="end">20</text><path d="M842 325 L852 315 L862 325 L852 335 Z" fill="#ff0000"/></svg>
<svg class="a" style="left:1032px;top:311px" width="312" height="119" viewBox="1032 311 312 119"><rect x="1102.64" y="325" width="1.3" height="85.0" fill="#ebebeb"/><rect x="1144.12" y="325" width="1.3" height="85.0" fill="#ebebeb"/><rect x="1185.61" y="325" width="1.3" height="85.0" fill="#ebebeb"/><rect x="1227.09" y="325" width="1.3" height="85.0" fill="#ebebeb"/><rect x="1268.58" y="325" width="1.3" height="85.0" fill="#ebebeb"/><rect x="1310.07" y="325" width="1.3" height="85.0" fill="#ebebeb"/><rect x="1062" y="391.10" width="268.0" height="1.3" fill="#e6e6e6"/><rect x="1062" y="372.35" width="268.0" height="1.3" fill="#e6e6e6"/><rect x="1062" y="353.60" width="268.0" height="1.3" fill="#e6e6e6"/><rect x="1062" y="334.85" width="268.0" height="1.3" fill="#e6e6e6"/><rect x="1240.70" y="332.70" width="13.6" height="10.6" fill="#fff" stroke="#ccc" stroke-width="1"/><rect x="1242.00" y="334.00" width="11" height="8" fill="#0000ff"/><text x="1324.40" y="341.60" font-size="11.35" fill="#8f8f8f" text-anchor="end">aida03 Stat</text><path d="M1062.00 410.50 L1064.07 410.50 L1064.07 364.00 L1066.15 364.00 L1066.15 364.00 L1068.22 364.00 L1068.22 348.25 L1070.30 348.25 L1070.30 343.38 L1072.37 343.38 L1072.37 361.38 L1074.45 361.38 L1074.45 347.12 L1076.52 347.12 L1076.52 347.12 L1078.59 347.12 L1078.59 344.88 L1080.67 344.88 L1080.67 348.25 L1082.74 348.25 L1082.74 348.25 L1084.82 348.25 L1084.82 346.38 L1086.89 346.38 L1086.89 360.62 L1088.97 360.62 L1088.97 347.12 L1091.04 347.12 L1091.04 347.12 L1093.11 347.12 L1093.11 346.38 L1095.19 346.38 L1095.19 348.25 L1097.26 348.25 L1097.26 401.12 L1099.34 401.12 L1099.34 401.12 L1101.41 401.12 L1101.41 367.75 L1103.49 367.75 L1103.49 367.75 L1105.56 367.75 L1105.56 401.12 L1107.63 401.12 L1107.63 367.75 L1109.71 367.75 L1109.71 367.75 L1111.78 367.75 L1111.78 367.75 L1113.86 367.75 L1113.86 367.75 L1115.93 367.75 L1115.93 367.75 L1118.01 367.75 L1118.01 367.75 L1120.08 367.75 L1120.08 401.12 L1122.15 401.12 L1122.15 366.62 L1124.23 366.62 L1124.23 367.38 L1126.30 367.38 L1126.30 366.62 L1128.38 366.62 L1128.38 366.62 L1130.45 366.62 L1130.45 349.38 L1132.53 349.38 L1132.53 357.25 L1134.60 357.25 L1134.60 363.25 L1136.67 363.25 L1136.67 350.12 L1138.75 350.12 L1138.75 347.88 L1140.82 347.88 L1140.82 349.75 L1142.90 349.75 L1142.90 347.12 L1144.97 347.12 L1144.97 348.62 L1147.05 348.62 L1147.05 349.38 L1149.12 349.38 L1149.12 361.38 L1151.20 361.38 L1151.20 349.38 L1153.27 349.38 L1153.27 349.38 L1155.34 349.38 L1155.34 349.38 L1157.42 349.38 L1157.42 350.12 L1159.49 350.12 L1159.49 349.38 L1161.57 349.38 L1161.57 349.38 L1163.64 349.38 L1163.64 366.62 L1165.72 366.62 L1165.72 401.12 L1167.79 401.12 L1167.79 400.00 L1169.86 400.00 L1169.86 367.75 L1171.94 367.75 L1171.94 367.75 L1174.01 367.75 L1174.01 367.75 L1176.09 367.75 L1176.09 367.75 L1178.16 367.75 L1178.16 367.75 L1180.24 367.75 L1180.24 367.75 L1182.31 367.75 L1182.31 401.12 L1184.38 401.12 L1184.38 367.75 L1186.46 367.75 L1186.46 367.75 L1188.53 367.75 L1188.53 367.75 L1190.61 367.75 L1190.61 367.75 L1192.68 367.75 L1192.68 367.75 L1194.76 367.75 L1194.76 367.75 L1196.83 367.75 L1196.83 358.94 L1198.90 358.94 L1198.90 348.06 L1200.98 348.06 L1200.98 348.06 L1203.05 348.06 L1203.05 348.06 L1205.13 348.06 L1205.13 332.50 L1207.20 332.50 L1207.20 348.25 L1209.28 348.25 L1209.28 348.25 L1211.35 348.25 L1211.35 361.38 L1213.42 361.38 L1213.42 349.75 L1215.50 349.75 L1215.50 342.62 L1217.57 342.62 L1217.57 332.50 L1219.65 332.50 L1219.65 350.50 L1221.72 350.50 L1221.72 350.50 L1223.80 350.50 L1223.80 350.50 L1225.87 350.50 L1225.87 362.12 L1227.94 362.12 L1227.94 350.88 L1230.02 350.88 L1230.02 401.12 L1232.09 401.12 L1232.09 367.75 L1234.17 367.75 L1234.17 367.75 L1236.24 367.75 L1236.24 367.75 L1238.32 367.75 L1238.32 370.00 L1240.39 370.00 L1240.39 367.38 L1242.46 367.38 L1242.46 367.38 L1244.54 367.38 L1244.54 401.12 L1246.61 401.12 L1246.61 370.00 L1248.69 370.00 L1248.69 367.00 L1250.76 367.00 L1250.76 368.88 L1252.84 368.88 L1252.84 373.75 L1254.91 373.75 L1254.91 372.25 L1256.98 372.25 L1256.98 370.75 L1259.06 370.75 L1259.06 401.12 L1261.13 401.12 L1261.13 376.19 L1263.21 376.19 L1263.21 350.50 L1265.28 350.50 L1265.28 350.50 L1267.36 350.50 L1267.36 350.50 L1269.43 350.50 L1269.43 352.38 L1271.50 352.38 L1271.50 352.38 L1273.58 352.38 L1273.58 349.75 L1275.65 349.75 L1275.65 351.44 L1277.73 351.44 L1277.73 347.50 L1279.80 347.50 L1279.80 352.38 L1281.88 352.38 L1281.88 352.38 L1283.95 352.38 L1283.95 347.50 L1286.02 347.50 L1286.02 350.50 L1288.10 350.50 L1288.10 352.00 L1290.17 352.00 L1290.17 352.00 L1292.25 352.00 L1292.25 369.62 L1294.32 369.62 L1294.32 371.12 L1296.40 371.12 L1296.40 376.19 L1298.47 376.19 L1298.47 377.12 L1300.54 377.12 L1300.54 377.12 L1302.62 377.12 L1302.62 376.56 L1304.69 376.56 L1304.69 376.56 L1306.77 376.56 L1306.77 378.62 L1308.84 378.62 L1308.84 379.75 L1310.92 379.75 L1310.92 382.38 L1312.99 382.38 L1312.99 378.62 L1315.07 378.62 L1315.07 379.38 L1317.14 379.38 L1317.14 381.62 L1319.21 381.62 L1319.21 378.25 L1321.29 378.25 L1321.29 379.00 L1323.36 379.00 L1323.36 381.62 L1325.44 381.62 L1325.44 402.62 L1327.51 402.62" fill="none" stroke="#4040ff" stroke-width="1.0" stroke-linejoin="round"/><rect x="1061" y="324" width="270.0" height="87.0" fill="none" stroke="#7d7d7d" stroke-width="2"/><text x="1062.90" y="424.90" font-size="10.67" fill="#545454" text-anchor="middle">0</text><text x="1104.39" y="424.90" font-size="10.67" fill="#545454" text-anchor="middle">20</text><text x="1145.87" y="424.90" font-size="10.67" fill="#545454" text-anchor="middle">40</text><text x="1187.36" y="424.90" font-size="10.67" fill="#545454" text-anchor="middle">60</text><text x="1228.84" y="424.90" font-size="10.67" fill="#545454" text-anchor="middle">80</text><text x="1270.33" y="424.90" font-size="10.67" fill="#545454" text-anchor="middle">100</text><text x="1311.82" y="424.90" font-size="10.67" fill="#545454" text-anchor="middle">120</text><text x="1057.70" y="414.20" font-size="10.67" fill="#545454" text-anchor="end">0</text><text x="1057.70" y="395.45" font-size="10.67" fill="#545454" text-anchor="end">5</text><text x="1057.70" y="376.70" font-size="10.67" fill="#545454" text-anchor="end">10</text><text x="1057.70" y="357.95" font-size="10.67" fill="#545454" text-anchor="end">15</text><text x="1057.70" y="339.20" font-size="10.67" fill="#545454" text-anchor="end">20</text><path d="M1318 325 L1328 315 L1338 325 L1328 335 Z" fill="#ff0000"/></svg>
<svg class="a" style="left:1508px;top:311px" width="312" height="119" viewBox="1508 311 312 119"><rect x="1578.64" y="325" width="1.3" height="85.0" fill="#ebebeb"/><rect x="1620.12" y="325" width="1.3" height="85.0" fill="#ebebeb"/><rect x="1661.61" y="325" width="1.3" height="85.0" fill="#ebebeb"/><rect x="1703.09" y="325" width="1.3" height="85.0" fill="#ebebeb"/><rect x="1744.58" y="325" width="1.3" height="85.0" fill="#ebebeb"/><rect x="1786.07" y="325" width="1.3" height="85.0" fill="#ebebeb"/><rect x="1538" y="389.59" width="268.0" height="1.3" fill="#e6e6e6"/><rect x="1538" y="369.33" width="268.0" height="1.3" fill="#e6e6e6"/><rect x="1538" y="349.07" width="268.0" height="1.3" fill="#e6e6e6"/><rect x="1538" y="328.81" width="268.0" height="1.3" fill="#e6e6e6"/><rect x="1716.70" y="332.70" width="13.6" height="10.6" fill="#fff" stroke="#ccc" stroke-width="1"/><rect x="1718.00" y="334.00" width="11" height="8" fill="#0000ff"/><text x="1800.40" y="341.60" font-size="11.35" fill="#8f8f8f" text-anchor="end">aida04 Stat</text><path d="M1538.00 410.50 L1540.07 410.50 L1540.07 335.91 L1542.15 335.91 L1542.15 332.18 L1544.22 332.18 L1544.22 338.38 L1546.30 338.38 L1546.30 338.31 L1548.37 338.31 L1548.37 335.41 L1550.45 335.41 L1550.45 340.39 L1552.52 340.39 L1552.52 338.31 L1554.59 338.31 L1554.59 338.31 L1556.67 338.31 L1556.67 340.70 L1558.74 340.70 L1558.74 340.93 L1560.82 340.93 L1560.82 342.11 L1562.89 342.11 L1562.89 339.45 L1564.97 339.45 L1564.97 343.16 L1567.04 343.16 L1567.04 342.09 L1569.11 342.09 L1569.11 341.95 L1571.19 341.95 L1571.19 342.11 L1573.26 342.11 L1573.26 362.61 L1575.34 362.61 L1575.34 362.68 L1577.41 362.68 L1577.41 362.53 L1579.49 362.53 L1579.49 362.65 L1581.56 362.65 L1581.56 362.69 L1583.63 362.69 L1583.63 362.53 L1585.71 362.53 L1585.71 362.28 L1587.78 362.28 L1587.78 362.34 L1589.86 362.34 L1589.86 362.35 L1591.93 362.35 L1591.93 362.62 L1594.01 362.62 L1594.01 362.46 L1596.08 362.46 L1596.08 362.59 L1598.15 362.59 L1598.15 362.64 L1600.23 362.64 L1600.23 362.67 L1602.30 362.67 L1602.30 362.62 L1604.38 362.62 L1604.38 362.27 L1606.45 362.27 L1606.45 342.46 L1608.53 342.46 L1608.53 344.06 L1610.60 344.06 L1610.60 344.12 L1612.67 344.12 L1612.67 342.93 L1614.75 342.93 L1614.75 342.83 L1616.82 342.83 L1616.82 342.79 L1618.90 342.79 L1618.90 345.72 L1620.97 345.72 L1620.97 343.59 L1623.05 343.59 L1623.05 345.12 L1625.12 345.12 L1625.12 345.39 L1627.20 345.39 L1627.20 345.32 L1629.27 345.32 L1629.27 345.38 L1631.34 345.38 L1631.34 345.21 L1633.42 345.21 L1633.42 345.29 L1635.49 345.29 L1635.49 346.49 L1637.57 346.49 L1637.57 343.71 L1639.64 343.71 L1639.64 362.69 L1641.72 362.69 L1641.72 362.70 L1643.79 362.70 L1643.79 362.70 L1645.86 362.70 L1645.86 363.00 L1647.94 363.00 L1647.94 362.94 L1650.01 362.94 L1650.01 362.79 L1652.09 362.79 L1652.09 362.73 L1654.16 362.73 L1654.16 363.53 L1656.24 363.53 L1656.24 363.51 L1658.31 363.51 L1658.31 363.90 L1660.38 363.90 L1660.38 363.65 L1662.46 363.65 L1662.46 363.61 L1664.53 363.61 L1664.53 363.69 L1666.61 363.69 L1666.61 363.85 L1668.68 363.85 L1668.68 364.56 L1670.76 364.56 L1670.76 364.75 L1672.83 364.75 L1672.83 343.97 L1674.90 343.97 L1674.90 346.40 L1676.98 346.40 L1676.98 346.49 L1679.05 346.49 L1679.05 346.38 L1681.13 346.38 L1681.13 346.55 L1683.20 346.55 L1683.20 344.90 L1685.28 344.90 L1685.28 342.70 L1687.35 342.70 L1687.35 346.55 L1689.42 346.55 L1689.42 346.58 L1691.50 346.58 L1691.50 343.37 L1693.57 343.37 L1693.57 345.62 L1695.65 345.62 L1695.65 345.57 L1697.72 345.57 L1697.72 345.79 L1699.80 345.79 L1699.80 345.67 L1701.87 345.67 L1701.87 344.07 L1703.94 344.07 L1703.94 345.71 L1706.02 345.71 L1706.02 363.49 L1708.09 363.49 L1708.09 363.52 L1710.17 363.52 L1710.17 364.53 L1712.24 364.53 L1712.24 364.65 L1714.32 364.65 L1714.32 364.35 L1716.39 364.35 L1716.39 364.51 L1718.46 364.51 L1718.46 365.21 L1720.54 365.21 L1720.54 365.23 L1722.61 365.23 L1722.61 365.40 L1724.69 365.40 L1724.69 365.44 L1726.76 365.44 L1726.76 366.20 L1728.84 366.20 L1728.84 368.39 L1730.91 368.39 L1730.91 366.42 L1732.98 366.42 L1732.98 366.35 L1735.06 366.35 L1735.06 366.95 L1737.13 366.95 L1737.13 373.04 L1739.21 373.04 L1739.21 345.74 L1741.28 345.74 L1741.28 345.70 L1743.36 345.70 L1743.36 345.77 L1745.43 345.77 L1745.43 345.55 L1747.50 345.55 L1747.50 342.91 L1749.58 342.91 L1749.58 345.66 L1751.65 345.66 L1751.65 345.63 L1753.73 345.63 L1753.73 334.28 L1755.80 334.28 L1755.80 344.86 L1757.88 344.86 L1757.88 344.85 L1759.95 344.85 L1759.95 344.73 L1762.02 344.73 L1762.02 343.33 L1764.10 343.33 L1764.10 344.94 L1766.17 344.94 L1766.17 340.05 L1768.25 340.05 L1768.25 345.60 L1770.32 345.60 L1770.32 343.26 L1772.40 343.26 L1772.40 370.38 L1774.47 370.38 L1774.47 369.57 L1776.54 369.57 L1776.54 374.84 L1778.62 374.84 L1778.62 374.84 L1780.69 374.84 L1780.69 374.84 L1782.77 374.84 L1782.77 377.68 L1784.84 377.68 L1784.84 381.73 L1786.92 381.73 L1786.92 383.35 L1788.99 383.35 L1788.99 376.46 L1791.07 376.46 L1791.07 380.92 L1793.14 380.92 L1793.14 384.16 L1795.21 384.16 L1795.21 375.65 L1797.29 375.65 L1797.29 379.30 L1799.36 379.30 L1799.36 383.35 L1801.44 383.35 L1801.44 374.44 L1803.51 374.44 L1803.51 383.35" fill="none" stroke="#4040ff" stroke-width="1.0" stroke-linejoin="round"/><rect x="1537" y="324" width="270.0" height="87.0" fill="none" stroke="#7d7d7d" stroke-width="2"/><text x="1538.90" y="424.90" font-size="10.67" fill="#545454" text-anchor="middle">0</text><text x="1580.39" y="424.90" font-size="10.67" fill="#545454" text-anchor="middle">20</text><text x="1621.87" y="424.90" font-size="10.67" fill="#545454" text-anchor="middle">40</text><text x="1663.36" y="424.90" font-size="10.67" fill="#545454" text-anchor="middle">60</text><text x="1704.84" y="424.90" font-size="10.67" fill="#545454" text-anchor="middle">80</text><text x="1746.33" y="424.90" font-size="10.67" fill="#545454" text-anchor="middle">100</text><text x="1787.82" y="424.90" font-size="10.67" fill="#545454" text-anchor="middle">120</text><text x="1533.70" y="414.20" font-size="10.67" fill="#545454" text-anchor="end">0</text><text x="1533.70" y="393.94" font-size="10.67" fill="#545454" text-anchor="end">5</text><text x="1533.70" y="373.68" font-size="10.67" fill="#545454" text-anchor="end">10</text><text x="1533.70" y="353.42" font-size="10.67" fill="#545454" text-anchor="end">15</text><text x="1533.70" y="333.16" font-size="10.67" fill="#545454" text-anchor="end">20</text><path d="M1794 325 L1804 315 L1814 325 L1804 335 Z" fill="#ff0000"/></svg>
<svg class="a" style="left:80px;top:433px" width="312" height="119" viewBox="80 433 312 119"><rect x="150.64" y="447" width="1.3" height="85.0" fill="#ebebeb"/><rect x="192.12" y="447" width="1.3" height="85.0" fill="#ebebeb"/><rect x="233.61" y="447" width="1.3" height="85.0" fill="#ebebeb"/><rect x="275.09" y="447" width="1.3" height="85.0" fill="#ebebeb"/><rect x="316.58" y="447" width="1.3" height="85.0" fill="#ebebeb"/><rect x="358.07" y="447" width="1.3" height="85.0" fill="#ebebeb"/><rect x="110" y="511.59" width="268.0" height="1.3" fill="#e6e6e6"/><rect x="110" y="491.33" width="268.0" height="1.3" fill="#e6e6e6"/><rect x="110" y="471.07" width="268.0" height="1.3" fill="#e6e6e6"/><rect x="110" y="450.81" width="268.0" height="1.3" fill="#e6e6e6"/><rect x="287.70" y="454.70" width="13.6" height="10.6" fill="#fff" stroke="#ccc" stroke-width="1"/><rect x="289.00" y="456.00" width="11" height="8" fill="#0000ff"/><text x="371.40" y="463.60" font-size="11.35" fill="#8f8f8f" text-anchor="end">aida05 Stat</text><path d="M110.00 532.50 L112.07 532.50 L112.07 468.36 L114.15 468.36 L114.15 458.04 L116.22 458.04 L116.22 470.49 L118.30 470.49 L118.30 470.51 L120.37 470.51 L120.37 468.75 L122.45 468.75 L122.45 470.13 L124.52 470.13 L124.52 470.11 L126.59 470.11 L126.59 470.08 L128.67 470.08 L128.67 471.35 L130.74 471.35 L130.74 469.98 L132.82 469.98 L132.82 469.99 L134.89 469.99 L134.89 470.03 L136.97 470.03 L136.97 471.44 L139.04 471.44 L139.04 471.17 L141.11 471.17 L141.11 470.49 L143.19 470.49 L143.19 472.91 L145.26 472.91 L145.26 488.19 L147.34 488.19 L147.34 488.13 L149.41 488.13 L149.41 488.11 L151.49 488.11 L151.49 488.04 L153.56 488.04 L153.56 488.13 L155.63 488.13 L155.63 488.05 L157.71 488.05 L157.71 488.48 L159.78 488.48 L159.78 488.27 L161.86 488.27 L161.86 488.04 L163.93 488.04 L163.93 488.18 L166.01 488.18 L166.01 488.06 L168.08 488.06 L168.08 488.44 L170.15 488.44 L170.15 488.27 L172.23 488.27 L172.23 488.37 L174.30 488.37 L174.30 489.08 L176.38 489.08 L176.38 489.07 L178.45 489.07 L178.45 473.12 L180.53 473.12 L180.53 470.50 L182.60 470.50 L182.60 471.80 L184.67 471.80 L184.67 473.81 L186.75 473.81 L186.75 473.85 L188.82 473.85 L188.82 473.60 L190.90 473.60 L190.90 472.19 L192.97 472.19 L192.97 474.21 L195.05 474.21 L195.05 474.17 L197.12 474.17 L197.12 474.04 L199.20 474.04 L199.20 474.18 L201.27 474.18 L201.27 474.90 L203.34 474.90 L203.34 473.20 L205.42 473.20 L205.42 471.79 L207.49 471.79 L207.49 473.88 L209.57 473.88 L209.57 473.63 L211.64 473.63 L211.64 489.34 L213.72 489.34 L213.72 489.24 L215.79 489.24 L215.79 489.21 L217.86 489.21 L217.86 488.90 L219.94 488.90 L219.94 488.97 L222.01 488.97 L222.01 489.27 L224.09 489.27 L224.09 488.96 L226.16 488.96 L226.16 489.28 L228.24 489.28 L228.24 489.90 L230.31 489.90 L230.31 490.13 L232.38 490.13 L232.38 490.19 L234.46 490.19 L234.46 489.77 L236.53 489.77 L236.53 490.09 L238.61 490.09 L238.61 490.09 L240.68 490.09 L240.68 489.72 L242.76 489.72 L242.76 489.77 L244.83 489.77 L244.83 474.89 L246.90 474.89 L246.90 477.09 L248.98 477.09 L248.98 474.63 L251.05 474.63 L251.05 475.35 L253.13 475.35 L253.13 475.43 L255.20 475.43 L255.20 476.35 L257.28 476.35 L257.28 476.31 L259.35 476.31 L259.35 476.20 L261.42 476.20 L261.42 476.41 L263.50 476.41 L263.50 476.30 L265.57 476.30 L265.57 476.47 L267.65 476.47 L267.65 476.34 L269.72 476.34 L269.72 476.41 L271.80 476.41 L271.80 476.38 L273.87 476.38 L273.87 476.37 L275.94 476.37 L275.94 475.39 L278.02 475.39 L278.02 490.06 L280.09 490.06 L280.09 490.58 L282.17 490.58 L282.17 490.78 L284.24 490.78 L284.24 490.72 L286.32 490.72 L286.32 490.95 L288.39 490.95 L288.39 490.59 L290.46 490.59 L290.46 490.71 L292.54 490.71 L292.54 490.58 L294.61 490.58 L294.61 490.61 L296.69 490.61 L296.69 491.75 L298.76 491.75 L298.76 491.72 L300.84 491.72 L300.84 491.82 L302.91 491.82 L302.91 491.83 L304.98 491.83 L304.98 491.87 L307.06 491.87 L307.06 491.75 L309.13 491.75 L309.13 491.60 L311.21 491.60 L311.21 475.25 L313.28 475.25 L313.28 474.59 L315.36 474.59 L315.36 475.91 L317.43 475.91 L317.43 475.67 L319.50 475.67 L319.50 473.62 L321.58 473.62 L321.58 476.89 L323.65 476.89 L323.65 477.04 L325.73 477.04 L325.73 454.54 L327.80 454.54 L327.80 476.51 L329.88 476.51 L329.88 476.70 L331.95 476.70 L331.95 474.27 L334.02 474.27 L334.02 476.58 L336.10 476.58 L336.10 474.23 L338.17 474.23 L338.17 458.76 L340.25 458.76 L340.25 474.65 L342.32 474.65 L342.32 477.26 L344.40 477.26 L344.40 491.98 L346.47 491.98 L346.47 491.57 L348.54 491.57 L348.54 492.79 L350.62 492.79 L350.62 492.79 L352.69 492.79 L352.69 492.79 L354.77 492.79 L354.77 497.65 L356.84 497.65 L356.84 499.68 L358.92 499.68 L358.92 501.30 L360.99 501.30 L360.99 496.44 L363.07 496.44 L363.07 499.68 L365.14 499.68 L365.14 500.49 L367.21 500.49 L367.21 494.00 L369.29 494.00 L369.29 499.68 L371.36 499.68 L371.36 499.68 L373.44 499.68 L373.44 492.38 L375.51 492.38 L375.51 499.68" fill="none" stroke="#4040ff" stroke-width="1.0" stroke-linejoin="round"/><rect x="109" y="446" width="270.0" height="87.0" fill="none" stroke="#7d7d7d" stroke-width="2"/><text x="109.90" y="546.90" font-size="10.67" fill="#545454" text-anchor="middle">0</text><text x="151.39" y="546.90" font-size="10.67" fill="#545454" text-anchor="middle">20</text><text x="192.87" y="546.90" font-size="10.67" fill="#545454" text-anchor="middle">40</text><text x="234.36" y="546.90" font-size="10.67" fill="#545454" text-anchor="middle">60</text><text x="275.84" y="546.90" font-size="10.67" fill="#545454" text-anchor="middle">80</text><text x="317.33" y="546.90" font-size="10.67" fill="#545454" text-anchor="middle">100</text><text x="358.82" y="546.90" font-size="10.67" fill="#545454" text-anchor="middle">120</text><text x="104.70" y="536.20" font-size="10.67" fill="#545454" text-anchor="end">0</text><text x="104.70" y="515.94" font-size="10.67" fill="#545454" text-anchor="end">5</text><text x="104.70" y="495.68" font-size="10.67" fill="#545454" text-anchor="end">10</text><text x="104.70" y="475.42" font-size="10.67" fill="#545454" text-anchor="end">15</text><text x="104.70" y="455.16" font-size="10.67" fill="#545454" text-anchor="end">20</text><path d="M366 447 L376 437 L386 447 L376 457 Z" fill="#ff0000"/></svg>
<svg class="a" style="left:556px;top:433px" width="312" height="119" viewBox="556 433 312 119"><rect x="626.64" y="447" width="1.3" height="85.0" fill="#ebebeb"/><rect x="668.12" y="447" width="1.3" height="85.0" fill="#ebebeb"/><rect x="709.61" y="447" width="1.3" height="85.0" fill="#ebebeb"/><rect x="751.09" y="447" width="1.3" height="85.0" fill="#ebebeb"/><rect x="792.58" y="447" width="1.3" height="85.0" fill="#ebebeb"/><rect x="834.07" y="447" width="1.3" height="85.0" fill="#ebebeb"/><rect x="586" y="511.59" width="268.0" height="1.3" fill="#e6e6e6"/><rect x="586" y="491.33" width="268.0" height="1.3" fill="#e6e6e6"/><rect x="586" y="471.07" width="268.0" height="1.3" fill="#e6e6e6"/><rect x="586" y="450.81" width="268.0" height="1.3" fill="#e6e6e6"/><rect x="763.70" y="454.70" width="13.6" height="10.6" fill="#fff" stroke="#ccc" stroke-width="1"/><rect x="765.00" y="456.00" width="11" height="8" fill="#0000ff"/><text x="847.40" y="463.60" font-size="11.35" fill="#8f8f8f" text-anchor="end">aida06 Stat</text><path d="M586.00 532.50 L588.07 532.50 L588.07 458.87 L590.15 458.87 L590.15 454.57 L592.22 454.57 L592.22 459.26 L594.30 459.26 L594.30 462.33 L596.37 462.33 L596.37 460.68 L598.45 460.68 L598.45 462.73 L600.52 462.73 L600.52 462.86 L602.59 462.86 L602.59 464.06 L604.67 464.06 L604.67 463.96 L606.74 463.96 L606.74 463.89 L608.82 463.89 L608.82 463.57 L610.89 463.57 L610.89 463.60 L612.97 463.60 L612.97 466.48 L615.04 466.48 L615.04 465.26 L617.11 465.26 L617.11 462.34 L619.19 462.34 L619.19 466.88 L621.26 466.88 L621.26 488.11 L623.34 488.11 L623.34 488.09 L625.41 488.09 L625.41 488.26 L627.49 488.26 L627.49 488.37 L629.56 488.37 L629.56 488.49 L631.63 488.49 L631.63 488.17 L633.71 488.17 L633.71 489.12 L635.78 489.12 L635.78 488.98 L637.86 488.98 L637.86 489.16 L639.93 489.16 L639.93 488.97 L642.01 488.97 L642.01 489.21 L644.08 489.21 L644.08 488.95 L646.15 488.95 L646.15 489.84 L648.23 489.84 L648.23 489.99 L650.30 489.99 L650.30 489.93 L652.38 489.93 L652.38 489.86 L654.45 489.86 L654.45 464.01 L656.53 464.01 L656.53 463.98 L658.60 463.98 L658.60 462.77 L660.67 462.77 L660.67 463.95 L662.75 463.95 L662.75 463.89 L664.82 463.89 L664.82 460.31 L666.90 460.31 L666.90 462.78 L668.97 462.78 L668.97 463.92 L671.05 463.92 L671.05 464.15 L673.12 464.15 L673.12 462.07 L675.20 462.07 L675.20 466.04 L677.27 466.04 L677.27 465.97 L679.34 465.97 L679.34 466.13 L681.42 466.13 L681.42 467.39 L683.49 467.39 L683.49 464.85 L685.57 464.85 L685.57 464.88 L687.64 464.88 L687.64 490.10 L689.72 490.10 L689.72 489.93 L691.79 489.93 L691.79 490.66 L693.86 490.66 L693.86 490.92 L695.94 490.92 L695.94 490.66 L698.01 490.66 L698.01 490.71 L700.09 490.71 L700.09 491.49 L702.16 491.49 L702.16 491.73 L704.24 491.73 L704.24 491.85 L706.31 491.85 L706.31 491.51 L708.38 491.51 L708.38 492.36 L710.46 492.36 L710.46 492.53 L712.53 492.53 L712.53 492.70 L714.61 492.70 L714.61 492.65 L716.68 492.65 L716.68 493.29 L718.76 493.29 L718.76 493.46 L720.83 493.46 L720.83 463.12 L722.90 463.12 L722.90 472.64 L724.98 472.64 L724.98 463.90 L727.05 463.90 L727.05 465.69 L729.13 465.69 L729.13 465.68 L731.20 465.68 L731.20 467.75 L733.28 467.75 L733.28 466.05 L735.35 466.05 L735.35 461.49 L737.42 461.49 L737.42 470.58 L739.50 470.58 L739.50 466.84 L741.57 466.84 L741.57 466.87 L743.65 466.87 L743.65 468.53 L745.72 468.53 L745.72 467.57 L747.80 467.57 L747.80 466.39 L749.87 466.39 L749.87 468.50 L751.94 468.50 L751.94 468.48 L754.02 468.48 L754.02 492.29 L756.09 492.29 L756.09 493.31 L758.17 493.31 L758.17 493.50 L760.24 493.50 L760.24 493.28 L762.32 493.28 L762.32 494.28 L764.39 494.28 L764.39 494.00 L766.46 494.00 L766.46 494.86 L768.54 494.86 L768.54 495.05 L770.61 495.05 L770.61 494.99 L772.69 494.99 L772.69 495.81 L774.76 495.81 L774.76 495.76 L776.84 495.76 L776.84 496.53 L778.91 496.53 L778.91 496.99 L780.98 496.99 L780.98 496.83 L783.06 496.83 L783.06 497.56 L785.13 497.56 L785.13 497.71 L787.21 497.71 L787.21 472.50 L789.28 472.50 L789.28 467.78 L791.36 467.78 L791.36 466.36 L793.43 466.36 L793.43 470.39 L795.50 470.39 L795.50 462.87 L797.58 462.87 L797.58 462.71 L799.65 462.71 L799.65 466.39 L801.73 466.39 L801.73 454.76 L803.80 454.76 L803.80 466.92 L805.88 466.92 L805.88 466.97 L807.95 466.97 L807.95 462.83 L810.02 462.83 L810.02 469.30 L812.10 469.30 L812.10 466.86 L814.17 466.86 L814.17 456.33 L816.25 456.33 L816.25 464.41 L818.32 464.41 L818.32 466.56 L820.40 466.56 L820.40 497.61 L822.47 497.61 L822.47 497.61 L824.54 497.61 L824.54 498.46 L826.62 498.46 L826.62 498.46 L828.69 498.46 L828.69 498.46 L830.77 498.46 L830.77 499.68 L832.84 499.68 L832.84 502.11 L834.92 502.11 L834.92 504.54 L836.99 504.54 L836.99 499.68 L839.07 499.68 L839.07 501.50 L841.14 501.50 L841.14 504.14 L843.21 504.14 L843.21 499.27 L845.29 499.27 L845.29 500.89 L847.36 500.89 L847.36 503.32 L849.44 503.32 L849.44 498.06 L851.51 498.06 L851.51 503.32" fill="none" stroke="#4040ff" stroke-width="1.0" stroke-linejoin="round"/><rect x="585" y="446" width="270.0" height="87.0" fill="none" stroke="#7d7d7d" stroke-width="2"/><text x="585.90" y="546.90" font-size="10.67" fill="#545454" text-anchor="middle">0</text><text x="627.39" y="546.90" font-size="10.67" fill="#545454" text-anchor="middle">20</text><text x="668.87" y="546.90" font-size="10.67" fill="#545454" text-anchor="middle">40</text><text x="710.36" y="546.90" font-size="10.67" fill="#545454" text-anchor="middle">60</text><text x="751.84" y="546.90" font-size="10.67" fill="#545454" text-anchor="middle">80</text><text x="793.33" y="546.90" font-size="10.67" fill="#545454" text-anchor="middle">100</text><text x="834.82" y="546.90" font-size="10.67" fill="#545454" text-anchor="middle">120</text><text x="580.70" y="536.20" font-size="10.67" fill="#545454" text-anchor="end">0</text><text x="580.70" y="515.94" font-size="10.67" fill="#545454" text-anchor="end">5</text><text x="580.70" y="495.68" font-size="10.67" fill="#545454" text-anchor="end">10</text><text x="580.70" y="475.42" font-size="10.67" fill="#545454" text-anchor="end">15</text><text x="580.70" y="455.16" font-size="10.67" fill="#545454" text-anchor="end">20</text><path d="M842 447 L852 437 L862 447 L852 457 Z" fill="#ff0000"/></svg>
<svg class="a" style="left:1032px;top:433px" width="312" height="119" viewBox="1032 433 312 119"><rect x="1102.64" y="447" width="1.3" height="85.0" fill="#ebebeb"/><rect x="1144.12" y="447" width="1.3" height="85.0" fill="#ebebeb"/><rect x="1185.61" y="447" width="1.3" height="85.0" fill="#ebebeb"/><rect x="1227.09" y="447" width="1.3" height="85.0" fill="#ebebeb"/><rect x="1268.58" y="447" width="1.3" height="85.0" fill="#ebebeb"/><rect x="1310.07" y="447" width="1.3" height="85.0" fill="#ebebeb"/><rect x="1062" y="511.59" width="268.0" height="1.3" fill="#e6e6e6"/><rect x="1062" y="491.33" width="268.0" height="1.3" fill="#e6e6e6"/><rect x="1062" y="471.07" width="268.0" height="1.3" fill="#e6e6e6"/><rect x="1062" y="450.81" width="268.0" height="1.3" fill="#e6e6e6"/><rect x="1240.70" y="454.70" width="13.6" height="10.6" fill="#fff" stroke="#ccc" stroke-width="1"/><rect x="1242.00" y="456.00" width="11" height="8" fill="#0000ff"/><text x="1324.40" y="463.60" font-size="11.35" fill="#8f8f8f" text-anchor="end">aida07 Stat</text><path d="M1062.00 532.50 L1064.07 532.50 L1064.07 470.37 L1066.15 470.37 L1066.15 456.10 L1068.22 456.10 L1068.22 472.13 L1070.30 472.13 L1070.30 472.12 L1072.37 472.12 L1072.37 466.78 L1074.45 466.78 L1074.45 466.72 L1076.52 466.72 L1076.52 466.88 L1078.59 466.88 L1078.59 466.93 L1080.67 466.93 L1080.67 466.89 L1082.74 466.89 L1082.74 469.41 L1084.82 469.41 L1084.82 469.25 L1086.89 469.25 L1086.89 469.15 L1088.97 469.15 L1088.97 472.21 L1091.04 472.21 L1091.04 467.59 L1093.11 467.59 L1093.11 470.58 L1095.19 470.58 L1095.19 471.19 L1097.26 471.19 L1097.26 487.49 L1099.34 487.49 L1099.34 487.57 L1101.41 487.57 L1101.41 487.33 L1103.49 487.33 L1103.49 487.61 L1105.56 487.61 L1105.56 487.38 L1107.63 487.38 L1107.63 487.47 L1109.71 487.47 L1109.71 487.61 L1111.78 487.61 L1111.78 487.40 L1113.86 487.40 L1113.86 487.62 L1115.93 487.62 L1115.93 486.58 L1118.01 486.58 L1118.01 486.76 L1120.08 486.76 L1120.08 486.75 L1122.15 486.75 L1122.15 486.59 L1124.23 486.59 L1124.23 486.39 L1126.30 486.39 L1126.30 486.73 L1128.38 486.73 L1128.38 486.68 L1130.45 486.68 L1130.45 467.45 L1132.53 467.45 L1132.53 469.52 L1134.60 469.52 L1134.60 468.41 L1136.67 468.41 L1136.67 468.37 L1138.75 468.37 L1138.75 468.16 L1140.82 468.16 L1140.82 468.36 L1142.90 468.36 L1142.90 466.42 L1144.97 466.42 L1144.97 469.47 L1147.05 469.47 L1147.05 466.06 L1149.12 466.06 L1149.12 465.98 L1151.20 465.98 L1151.20 468.58 L1153.27 468.58 L1153.27 468.43 L1155.34 468.43 L1155.34 468.60 L1157.42 468.60 L1157.42 466.53 L1159.49 466.53 L1159.49 468.43 L1161.57 468.43 L1161.57 469.78 L1163.64 469.78 L1163.64 486.49 L1165.72 486.49 L1165.72 486.33 L1167.79 486.33 L1167.79 486.51 L1169.86 486.51 L1169.86 486.60 L1171.94 486.60 L1171.94 486.32 L1174.01 486.32 L1174.01 486.77 L1176.09 486.77 L1176.09 486.37 L1178.16 486.37 L1178.16 486.65 L1180.24 486.65 L1180.24 486.72 L1182.31 486.72 L1182.31 486.73 L1184.38 486.73 L1184.38 485.79 L1186.46 485.79 L1186.46 485.54 L1188.53 485.54 L1188.53 485.85 L1190.61 485.85 L1190.61 485.66 L1192.68 485.66 L1192.68 485.63 L1194.76 485.63 L1194.76 485.76 L1196.83 485.76 L1196.83 470.61 L1198.90 470.61 L1198.90 468.48 L1200.98 468.48 L1200.98 472.49 L1203.05 472.49 L1203.05 472.67 L1205.13 472.67 L1205.13 472.48 L1207.20 472.48 L1207.20 472.50 L1209.28 472.50 L1209.28 471.05 L1211.35 471.05 L1211.35 470.89 L1213.42 470.89 L1213.42 471.05 L1215.50 471.05 L1215.50 474.54 L1217.57 474.54 L1217.57 474.52 L1219.65 474.52 L1219.65 472.97 L1221.72 472.97 L1221.72 474.59 L1223.80 474.59 L1223.80 472.45 L1225.87 472.45 L1225.87 472.62 L1227.94 472.62 L1227.94 472.54 L1230.02 472.54 L1230.02 485.88 L1232.09 485.88 L1232.09 486.11 L1234.17 486.11 L1234.17 486.11 L1236.24 486.11 L1236.24 486.04 L1238.32 486.04 L1238.32 488.65 L1240.39 488.65 L1240.39 486.54 L1242.46 486.54 L1242.46 486.60 L1244.54 486.60 L1244.54 486.47 L1246.61 486.47 L1246.61 493.62 L1248.69 493.62 L1248.69 492.08 L1250.76 492.08 L1250.76 490.21 L1252.84 490.21 L1252.84 495.12 L1254.91 495.12 L1254.91 495.34 L1256.98 495.34 L1256.98 495.18 L1259.06 495.18 L1259.06 495.21 L1261.13 495.21 L1261.13 497.47 L1263.21 497.47 L1263.21 468.27 L1265.28 468.27 L1265.28 471.04 L1267.36 471.04 L1267.36 475.66 L1269.43 475.66 L1269.43 467.76 L1271.50 467.76 L1271.50 464.34 L1273.58 464.34 L1273.58 467.68 L1275.65 467.68 L1275.65 467.80 L1277.73 467.80 L1277.73 453.54 L1279.80 453.54 L1279.80 470.48 L1281.88 470.48 L1281.88 470.51 L1283.95 470.51 L1283.95 462.69 L1286.02 462.69 L1286.02 467.80 L1288.10 467.80 L1288.10 468.99 L1290.17 468.99 L1290.17 455.81 L1292.25 455.81 L1292.25 473.03 L1294.32 473.03 L1294.32 464.83 L1296.40 464.83 L1296.40 496.44 L1298.47 496.44 L1298.47 497.45 L1300.54 497.45 L1300.54 497.45 L1302.62 497.45 L1302.62 497.45 L1304.69 497.45 L1304.69 497.45 L1306.77 497.45 L1306.77 498.66 L1308.84 498.66 L1308.84 502.11 L1310.92 502.11 L1310.92 500.89 L1312.99 500.89 L1312.99 498.66 L1315.07 498.66 L1315.07 501.50 L1317.14 501.50 L1317.14 503.32 L1319.21 503.32 L1319.21 498.06 L1321.29 498.06 L1321.29 500.29 L1323.36 500.29 L1323.36 502.11 L1325.44 502.11 L1325.44 497.65 L1327.51 497.65 L1327.51 502.11" fill="none" stroke="#4040ff" stroke-width="1.0" stroke-linejoin="round"/><rect x="1061" y="446" width="270.0" height="87.0" fill="none" stroke="#7d7d7d" stroke-width="2"/><text x="1062.90" y="546.90" font-size="10.67" fill="#545454" text-anchor="middle">0</text><text x="1104.39" y="546.90" font-size="10.67" fill="#545454" text-anchor="middle">20</text><text x="1145.87" y="546.90" font-size="10.67" fill="#545454" text-anchor="middle">40</text><text x="1187.36" y="546.90" font-size="10.67" fill="#545454" text-anchor="middle">60</text><text x="1228.84" y="546.90" font-size="10.67" fill="#545454" text-anchor="middle">80</text><text x="1270.33" y="546.90" font-size="10.67" fill="#545454" text-anchor="middle">100</text><text x="1311.82" y="546.90" font-size="10.67" fill="#545454" text-anchor="middle">120</text><text x="1057.70" y="536.20" font-size="10.67" fill="#545454" text-anchor="end">0</text><text x="1057.70" y="515.94" font-size="10.67" fill="#545454" text-anchor="end">5</text><text x="1057.70" y="495.68" font-size="10.67" fill="#545454" text-anchor="end">10</text><text x="1057.70" y="475.42" font-size="10.67" fill="#545454" text-anchor="end">15</text><text x="1057.70" y="455.16" font-size="10.67" fill="#545454" text-anchor="end">20</text><path d="M1318 447 L1328 437 L1338 447 L1328 457 Z" fill="#ff0000"/></svg>
<svg class="a" style="left:1508px;top:433px" width="312" height="119" viewBox="1508 433 312 119"><rect x="1578.64" y="447" width="1.3" height="85.0" fill="#ebebeb"/><rect x="1620.12" y="447" width="1.3" height="85.0" fill="#ebebeb"/><rect x="1661.61" y="447" width="1.3" height="85.0" fill="#ebebeb"/><rect x="1703.09" y="447" width="1.3" height="85.0" fill="#ebebeb"/><rect x="1744.58" y="447" width="1.3" height="85.0" fill="#ebebeb"/><rect x="1786.07" y="447" width="1.3" height="85.0" fill="#ebebeb"/><rect x="1538" y="512.46" width="268.0" height="1.3" fill="#e6e6e6"/><rect x="1538" y="493.07" width="268.0" height="1.3" fill="#e6e6e6"/><rect x="1538" y="473.69" width="268.0" height="1.3" fill="#e6e6e6"/><rect x="1538" y="454.30" width="268.0" height="1.3" fill="#e6e6e6"/><rect x="1716.70" y="454.70" width="13.6" height="10.6" fill="#fff" stroke="#ccc" stroke-width="1"/><rect x="1718.00" y="456.00" width="11" height="8" fill="#0000ff"/><text x="1800.40" y="463.60" font-size="11.35" fill="#8f8f8f" text-anchor="end">aida08 Stat</text><path d="M1538.00 532.50 L1540.07 532.50 L1540.07 466.32 L1542.15 466.32 L1542.15 459.19 L1544.22 459.19 L1544.22 471.37 L1546.30 471.37 L1546.30 469.29 L1548.37 469.29 L1548.37 470.33 L1550.45 470.33 L1550.45 472.26 L1552.52 472.26 L1552.52 474.21 L1554.59 474.21 L1554.59 474.30 L1556.67 474.30 L1556.67 474.23 L1558.74 474.23 L1558.74 474.47 L1560.82 474.47 L1560.82 474.27 L1562.89 474.27 L1562.89 471.62 L1564.97 471.62 L1564.97 474.31 L1567.04 474.31 L1567.04 474.37 L1569.11 474.37 L1569.11 474.21 L1571.19 474.21 L1571.19 474.29 L1573.26 474.29 L1573.26 489.39 L1575.34 489.39 L1575.34 489.05 L1577.41 489.05 L1577.41 489.44 L1579.49 489.44 L1579.49 489.17 L1581.56 489.17 L1581.56 489.46 L1583.63 489.46 L1583.63 489.38 L1585.71 489.38 L1585.71 489.03 L1587.78 489.03 L1587.78 489.40 L1589.86 489.40 L1589.86 489.20 L1591.93 489.20 L1591.93 489.28 L1594.01 489.28 L1594.01 489.29 L1596.08 489.29 L1596.08 489.27 L1598.15 489.27 L1598.15 489.41 L1600.23 489.41 L1600.23 489.11 L1602.30 489.11 L1602.30 489.46 L1604.38 489.46 L1604.38 489.39 L1606.45 489.39 L1606.45 473.89 L1608.53 473.89 L1608.53 473.90 L1610.60 473.90 L1610.60 473.94 L1612.67 473.94 L1612.67 473.86 L1614.75 473.86 L1614.75 473.92 L1616.82 473.92 L1616.82 472.96 L1618.90 472.96 L1618.90 474.05 L1620.97 474.05 L1620.97 473.93 L1623.05 473.93 L1623.05 474.04 L1625.12 474.04 L1625.12 473.34 L1627.20 473.34 L1627.20 474.55 L1629.27 474.55 L1629.27 474.46 L1631.34 474.46 L1631.34 474.51 L1633.42 474.51 L1633.42 474.57 L1635.49 474.57 L1635.49 474.53 L1637.57 474.53 L1637.57 474.61 L1639.64 474.61 L1639.64 489.57 L1641.72 489.57 L1641.72 489.45 L1643.79 489.45 L1643.79 489.39 L1645.86 489.39 L1645.86 489.16 L1647.94 489.16 L1647.94 489.40 L1650.01 489.40 L1650.01 490.34 L1652.09 490.34 L1652.09 490.27 L1654.16 490.27 L1654.16 489.93 L1656.24 489.93 L1656.24 490.36 L1658.31 490.36 L1658.31 490.10 L1660.38 490.10 L1660.38 490.21 L1662.46 490.21 L1662.46 490.08 L1664.53 490.08 L1664.53 491.05 L1666.61 491.05 L1666.61 490.88 L1668.68 490.88 L1668.68 490.97 L1670.76 490.97 L1670.76 490.90 L1672.83 490.90 L1672.83 474.21 L1674.90 474.21 L1674.90 474.24 L1676.98 474.24 L1676.98 474.37 L1679.05 474.37 L1679.05 474.41 L1681.13 474.41 L1681.13 473.58 L1683.20 473.58 L1683.20 474.30 L1685.28 474.30 L1685.28 474.35 L1687.35 474.35 L1687.35 474.22 L1689.42 474.22 L1689.42 473.68 L1691.50 473.68 L1691.50 473.99 L1693.57 473.99 L1693.57 473.94 L1695.65 473.94 L1695.65 474.07 L1697.72 474.07 L1697.72 471.24 L1699.80 471.24 L1699.80 474.32 L1701.87 474.32 L1701.87 473.42 L1703.94 473.42 L1703.94 464.90 L1706.02 464.90 L1706.02 490.78 L1708.09 490.78 L1708.09 490.93 L1710.17 490.93 L1710.17 491.14 L1712.24 491.14 L1712.24 491.99 L1714.32 491.99 L1714.32 491.58 L1716.39 491.58 L1716.39 491.79 L1718.46 491.79 L1718.46 491.93 L1720.54 491.93 L1720.54 491.58 L1722.61 491.58 L1722.61 491.75 L1724.69 491.75 L1724.69 492.49 L1726.76 492.49 L1726.76 492.42 L1728.84 492.42 L1728.84 494.41 L1730.91 494.41 L1730.91 492.67 L1732.98 492.67 L1732.98 492.42 L1735.06 492.42 L1735.06 492.77 L1737.13 492.77 L1737.13 499.22 L1739.21 499.22 L1739.21 464.96 L1741.28 464.96 L1741.28 464.95 L1743.36 464.95 L1743.36 464.89 L1745.43 464.89 L1745.43 464.16 L1747.50 464.16 L1747.50 464.11 L1749.58 464.11 L1749.58 464.19 L1751.65 464.19 L1751.65 464.22 L1753.73 464.22 L1753.73 453.35 L1755.80 453.35 L1755.80 464.32 L1757.88 464.32 L1757.88 464.35 L1759.95 464.35 L1759.95 464.32 L1762.02 464.32 L1762.02 465.05 L1764.10 465.05 L1764.10 465.13 L1766.17 465.13 L1766.17 459.94 L1768.25 459.94 L1768.25 464.19 L1770.32 464.19 L1770.32 466.07 L1772.40 466.07 L1772.40 496.83 L1774.47 496.83 L1774.47 495.66 L1776.54 495.66 L1776.54 501.48 L1778.62 501.48 L1778.62 501.48 L1780.69 501.48 L1780.69 501.48 L1782.77 501.48 L1782.77 502.64 L1784.84 502.64 L1784.84 506.33 L1786.92 506.33 L1786.92 487.52 L1788.99 487.52 L1788.99 501.87 L1791.07 501.87 L1791.07 505.16 L1793.14 505.16 L1793.14 508.07 L1795.21 508.07 L1795.21 501.87 L1797.29 501.87 L1797.29 504.39 L1799.36 504.39 L1799.36 506.91 L1801.44 506.91 L1801.44 501.09 L1803.51 501.09 L1803.51 506.91" fill="none" stroke="#4040ff" stroke-width="1.0" stroke-linejoin="round"/><rect x="1537" y="446" width="270.0" height="87.0" fill="none" stroke="#7d7d7d" stroke-width="2"/><text x="1538.90" y="546.90" font-size="10.67" fill="#545454" text-anchor="middle">0</text><text x="1580.39" y="546.90" font-size="10.67" fill="#545454" text-anchor="middle">20</text><text x="1621.87" y="546.90" font-size="10.67" fill="#545454" text-anchor="middle">40</text><text x="1663.36" y="546.90" font-size="10.67" fill="#545454" text-anchor="middle">60</text><text x="1704.84" y="546.90" font-size="10.67" fill="#545454" text-anchor="middle">80</text><text x="1746.33" y="546.90" font-size="10.67" fill="#545454" text-anchor="middle">100</text><text x="1787.82" y="546.90" font-size="10.67" fill="#545454" text-anchor="middle">120</text><text x="1533.70" y="536.20" font-size="10.67" fill="#545454" text-anchor="end">0</text><text x="1533.70" y="516.81" font-size="10.67" fill="#545454" text-anchor="end">5</text><text x="1533.70" y="497.42" font-size="10.67" fill="#545454" text-anchor="end">10</text><text x="1533.70" y="478.04" font-size="10.67" fill="#545454" text-anchor="end">15</text><text x="1533.70" y="458.65" font-size="10.67" fill="#545454" text-anchor="end">20</text><path d="M1794 447 L1804 437 L1814 447 L1804 457 Z" fill="#ff0000"/></svg>
<svg class="a" style="left:80px;top:555px" width="312" height="119" viewBox="80 555 312 119"><rect x="150.64" y="569" width="1.3" height="85.0" fill="#ebebeb"/><rect x="192.12" y="569" width="1.3" height="85.0" fill="#ebebeb"/><rect x="233.61" y="569" width="1.3" height="85.0" fill="#ebebeb"/><rect x="275.09" y="569" width="1.3" height="85.0" fill="#ebebeb"/><rect x="316.58" y="569" width="1.3" height="85.0" fill="#ebebeb"/><rect x="358.07" y="569" width="1.3" height="85.0" fill="#ebebeb"/><rect x="110" y="634.46" width="268.0" height="1.3" fill="#e6e6e6"/><rect x="110" y="615.07" width="268.0" height="1.3" fill="#e6e6e6"/><rect x="110" y="595.69" width="268.0" height="1.3" fill="#e6e6e6"/><rect x="110" y="576.30" width="268.0" height="1.3" fill="#e6e6e6"/><rect x="287.70" y="576.70" width="13.6" height="10.6" fill="#fff" stroke="#ccc" stroke-width="1"/><rect x="289.00" y="578.00" width="11" height="8" fill="#0000ff"/><text x="371.40" y="585.60" font-size="11.35" fill="#8f8f8f" text-anchor="end">aida09 Stat</text><path d="M110.00 654.50 L112.07 654.50 L112.07 577.70 L114.15 577.70 L114.15 575.87 L116.22 575.87 L116.22 578.27 L118.30 578.27 L118.30 578.18 L120.37 578.18 L120.37 578.43 L122.45 578.43 L122.45 579.48 L124.52 579.48 L124.52 579.51 L126.59 579.51 L126.59 579.53 L128.67 579.53 L128.67 580.34 L130.74 580.34 L130.74 580.31 L132.82 580.31 L132.82 580.36 L134.89 580.36 L134.89 580.46 L136.97 580.46 L136.97 581.50 L139.04 581.50 L139.04 581.71 L141.11 581.71 L141.11 581.60 L143.19 581.60 L143.19 582.77 L145.26 582.77 L145.26 618.46 L147.34 618.46 L147.34 618.50 L149.41 618.50 L149.41 618.61 L151.49 618.61 L151.49 618.27 L153.56 618.27 L153.56 618.67 L155.63 618.67 L155.63 618.44 L157.71 618.44 L157.71 618.25 L159.78 618.25 L159.78 618.63 L161.86 618.63 L161.86 618.41 L163.93 618.41 L163.93 618.38 L166.01 618.38 L166.01 618.65 L168.08 618.65 L168.08 618.50 L170.15 618.50 L170.15 618.34 L172.23 618.34 L172.23 618.46 L174.30 618.46 L174.30 618.33 L176.38 618.33 L176.38 618.60 L178.45 618.60 L178.45 581.33 L180.53 581.33 L180.53 581.20 L182.60 581.20 L182.60 580.47 L184.67 580.47 L184.67 581.25 L186.75 581.25 L186.75 581.32 L188.82 581.32 L188.82 581.17 L190.90 581.17 L190.90 581.31 L192.97 581.31 L192.97 581.34 L195.05 581.34 L195.05 582.47 L197.12 582.47 L197.12 581.27 L199.20 581.27 L199.20 582.54 L201.27 582.54 L201.27 582.51 L203.34 582.51 L203.34 583.86 L205.42 583.86 L205.42 582.46 L207.49 582.46 L207.49 583.25 L209.57 583.25 L209.57 583.17 L211.64 583.17 L211.64 616.82 L213.72 616.82 L213.72 618.04 L215.79 618.04 L215.79 617.85 L217.86 617.85 L217.86 617.66 L219.94 617.66 L219.94 617.82 L222.01 617.82 L222.01 617.73 L224.09 617.73 L224.09 617.91 L226.16 617.91 L226.16 617.74 L228.24 617.74 L228.24 618.04 L230.31 618.04 L230.31 617.95 L232.38 617.95 L232.38 617.78 L234.46 617.78 L234.46 617.75 L236.53 617.75 L236.53 617.89 L238.61 617.89 L238.61 618.05 L240.68 618.05 L240.68 617.97 L242.76 617.97 L242.76 617.99 L244.83 617.99 L244.83 579.96 L246.90 579.96 L246.90 580.38 L248.98 580.38 L248.98 582.06 L251.05 582.06 L251.05 580.50 L253.13 580.50 L253.13 581.67 L255.20 581.67 L255.20 580.57 L257.28 580.57 L257.28 580.64 L259.35 580.64 L259.35 580.54 L261.42 580.54 L261.42 581.58 L263.50 581.58 L263.50 581.58 L265.57 581.58 L265.57 581.56 L267.65 581.56 L267.65 581.65 L269.72 581.65 L269.72 581.63 L271.80 581.63 L271.80 581.66 L273.87 581.66 L273.87 581.68 L275.94 581.68 L275.94 581.49 L278.02 581.49 L278.02 618.77 L280.09 618.77 L280.09 618.53 L282.17 618.53 L282.17 619.63 L284.24 619.63 L284.24 619.31 L286.32 619.31 L286.32 619.31 L288.39 619.31 L288.39 619.69 L290.46 619.69 L290.46 619.54 L292.54 619.54 L292.54 619.49 L294.61 619.49 L294.61 619.71 L296.69 619.71 L296.69 619.52 L298.76 619.52 L298.76 619.30 L300.84 619.30 L300.84 619.67 L302.91 619.67 L302.91 619.44 L304.98 619.44 L304.98 619.66 L307.06 619.66 L307.06 619.45 L309.13 619.45 L309.13 619.30 L311.21 619.30 L311.21 580.37 L313.28 580.37 L313.28 580.41 L315.36 580.41 L315.36 581.18 L317.43 581.18 L317.43 581.30 L319.50 581.30 L319.50 581.11 L321.58 581.11 L321.58 581.22 L323.65 581.22 L323.65 581.27 L325.73 581.27 L325.73 575.73 L327.80 575.73 L327.80 581.61 L329.88 581.61 L329.88 581.55 L331.95 581.55 L331.95 581.70 L334.02 581.70 L334.02 581.48 L336.10 581.48 L336.10 581.50 L338.17 581.50 L338.17 577.05 L340.25 577.05 L340.25 582.18 L342.32 582.18 L342.32 582.31 L344.40 582.31 L344.40 619.41 L346.47 619.41 L346.47 619.41 L348.54 619.41 L348.54 620.38 L350.62 620.38 L350.62 620.38 L352.69 620.38 L352.69 620.38 L354.77 620.38 L354.77 622.70 L356.84 622.70 L356.84 623.87 L358.92 623.87 L358.92 625.03 L360.99 625.03 L360.99 622.70 L363.07 622.70 L363.07 625.03 L365.14 625.03 L365.14 624.45 L367.21 624.45 L367.21 620.96 L369.29 620.96 L369.29 625.42 L371.36 625.42 L371.36 625.42 L373.44 625.42 L373.44 620.57 L375.51 620.57 L375.51 625.42" fill="none" stroke="#4040ff" stroke-width="1.0" stroke-linejoin="round"/><rect x="109" y="568" width="270.0" height="87.0" fill="none" stroke="#7d7d7d" stroke-width="2"/><text x="109.90" y="668.90" font-size="10.67" fill="#545454" text-anchor="middle">0</text><text x="151.39" y="668.90" font-size="10.67" fill="#545454" text-anchor="middle">20</text><text x="192.87" y="668.90" font-size="10.67" fill="#545454" text-anchor="middle">40</text><text x="234.36" y="668.90" font-size="10.67" fill="#545454" text-anchor="middle">60</text><text x="275.84" y="668.90" font-size="10.67" fill="#545454" text-anchor="middle">80</text><text x="317.33" y="668.90" font-size="10.67" fill="#545454" text-anchor="middle">100</text><text x="358.82" y="668.90" font-size="10.67" fill="#545454" text-anchor="middle">120</text><text x="104.70" y="658.20" font-size="10.67" fill="#545454" text-anchor="end">0</text><text x="104.70" y="638.81" font-size="10.67" fill="#545454" text-anchor="end">5</text><text x="104.70" y="619.42" font-size="10.67" fill="#545454" text-anchor="end">10</text><text x="104.70" y="600.04" font-size="10.67" fill="#545454" text-anchor="end">15</text><text x="104.70" y="580.65" font-size="10.67" fill="#545454" text-anchor="end">20</text><path d="M366 569 L376 559 L386 569 L376 579 Z" fill="#ff0000"/></svg>
<svg class="a" style="left:556px;top:555px" width="312" height="119" viewBox="556 555 312 119"><rect x="626.64" y="569" width="1.3" height="85.0" fill="#ebebeb"/><rect x="668.12" y="569" width="1.3" height="85.0" fill="#ebebeb"/><rect x="709.61" y="569" width="1.3" height="85.0" fill="#ebebeb"/><rect x="751.09" y="569" width="1.3" height="85.0" fill="#ebebeb"/><rect x="792.58" y="569" width="1.3" height="85.0" fill="#ebebeb"/><rect x="834.07" y="569" width="1.3" height="85.0" fill="#ebebeb"/><rect x="586" y="634.46" width="268.0" height="1.3" fill="#e6e6e6"/><rect x="586" y="615.07" width="268.0" height="1.3" fill="#e6e6e6"/><rect x="586" y="595.69" width="268.0" height="1.3" fill="#e6e6e6"/><rect x="586" y="576.30" width="268.0" height="1.3" fill="#e6e6e6"/><rect x="763.70" y="576.70" width="13.6" height="10.6" fill="#fff" stroke="#ccc" stroke-width="1"/><rect x="765.00" y="578.00" width="11" height="8" fill="#0000ff"/><text x="847.40" y="585.60" font-size="11.35" fill="#8f8f8f" text-anchor="end">aida10 Stat</text><path d="M586.00 654.50 L588.07 654.50 L588.07 580.90 L590.15 580.90 L590.15 577.22 L592.22 577.22 L592.22 584.00 L594.30 584.00 L594.30 581.73 L596.37 581.73 L596.37 582.67 L598.45 582.67 L598.45 582.71 L600.52 582.71 L600.52 584.07 L602.59 584.07 L602.59 584.26 L604.67 584.26 L604.67 585.39 L606.74 585.39 L606.74 587.06 L608.82 587.06 L608.82 586.95 L610.89 586.95 L610.89 584.50 L612.97 584.50 L612.97 585.41 L615.04 585.41 L615.04 584.45 L617.11 584.45 L617.11 586.30 L619.19 586.30 L619.19 582.33 L621.26 582.33 L621.26 618.64 L623.34 618.64 L623.34 618.70 L625.41 618.70 L625.41 618.64 L627.49 618.64 L627.49 618.81 L629.56 618.81 L629.56 618.53 L631.63 618.53 L631.63 618.52 L633.71 618.52 L633.71 618.60 L635.78 618.60 L635.78 618.83 L637.86 618.83 L637.86 618.66 L639.93 618.66 L639.93 618.75 L642.01 618.75 L642.01 618.79 L644.08 618.79 L644.08 618.46 L646.15 618.46 L646.15 618.44 L648.23 618.44 L648.23 619.70 L650.30 619.70 L650.30 619.32 L652.38 619.32 L652.38 619.44 L654.45 619.44 L654.45 582.72 L656.53 582.72 L656.53 582.74 L658.60 582.74 L658.60 582.73 L660.67 582.73 L660.67 582.68 L662.75 582.68 L662.75 582.53 L664.82 582.53 L664.82 581.12 L666.90 581.12 L666.90 580.88 L668.97 580.88 L668.97 582.50 L671.05 582.50 L671.05 582.31 L673.12 582.31 L673.12 581.58 L675.20 581.58 L675.20 574.69 L677.27 574.69 L677.27 581.28 L679.34 581.28 L679.34 582.10 L681.42 582.10 L681.42 581.97 L683.49 581.97 L683.49 581.12 L685.57 581.12 L685.57 582.34 L687.64 582.34 L687.64 619.54 L689.72 619.54 L689.72 619.59 L691.79 619.59 L691.79 619.40 L693.86 619.40 L693.86 619.51 L695.94 619.51 L695.94 620.21 L698.01 620.21 L698.01 620.22 L700.09 620.22 L700.09 620.47 L702.16 620.47 L702.16 620.18 L704.24 620.18 L704.24 620.08 L706.31 620.08 L706.31 620.08 L708.38 620.08 L708.38 620.25 L710.46 620.25 L710.46 621.33 L712.53 621.33 L712.53 621.35 L714.61 621.35 L714.61 621.28 L716.68 621.28 L716.68 620.91 L718.76 620.91 L718.76 621.21 L720.83 621.21 L720.83 578.80 L722.90 578.80 L722.90 582.42 L724.98 582.42 L724.98 582.48 L727.05 582.48 L727.05 582.40 L729.13 582.40 L729.13 582.30 L731.20 582.30 L731.20 574.83 L733.28 574.83 L733.28 574.81 L735.35 574.81 L735.35 582.65 L737.42 582.65 L737.42 582.57 L739.50 582.57 L739.50 583.02 L741.57 583.02 L741.57 583.18 L743.65 583.18 L743.65 581.65 L745.72 581.65 L745.72 582.71 L747.80 582.71 L747.80 583.63 L749.87 583.63 L749.87 583.85 L751.94 583.85 L751.94 583.70 L754.02 583.70 L754.02 621.18 L756.09 621.18 L756.09 620.93 L758.17 620.93 L758.17 622.01 L760.24 622.01 L760.24 621.91 L762.32 621.91 L762.32 621.96 L764.39 621.96 L764.39 622.13 L766.46 622.13 L766.46 621.89 L768.54 621.89 L768.54 622.58 L770.61 622.58 L770.61 622.90 L772.69 622.90 L772.69 622.87 L774.76 622.87 L774.76 622.78 L776.84 622.78 L776.84 622.96 L778.91 622.96 L778.91 622.74 L780.98 622.74 L780.98 623.41 L783.06 623.41 L783.06 623.48 L785.13 623.48 L785.13 623.54 L787.21 623.54 L787.21 584.48 L789.28 584.48 L789.28 582.74 L791.36 582.74 L791.36 582.76 L793.43 582.76 L793.43 582.72 L795.50 582.72 L795.50 582.67 L797.58 582.67 L797.58 582.83 L799.65 582.83 L799.65 582.86 L801.73 582.86 L801.73 578.21 L803.80 578.21 L803.80 582.56 L805.88 582.56 L805.88 582.64 L807.95 582.64 L807.95 583.74 L810.02 583.74 L810.02 582.56 L812.10 582.56 L812.10 581.62 L814.17 581.62 L814.17 579.05 L816.25 579.05 L816.25 585.28 L818.32 585.28 L818.32 583.14 L820.40 583.14 L820.40 623.56 L822.47 623.56 L822.47 623.56 L824.54 623.56 L824.54 623.56 L826.62 623.56 L826.62 624.37 L828.69 624.37 L828.69 624.37 L830.77 624.37 L830.77 624.64 L832.84 624.64 L832.84 626.39 L834.92 626.39 L834.92 628.33 L836.99 628.33 L836.99 624.64 L839.07 624.64 L839.07 625.42 L841.14 625.42 L841.14 627.74 L843.21 627.74 L843.21 624.64 L845.29 624.64 L845.29 625.42 L847.36 625.42 L847.36 627.16 L849.44 627.16 L849.44 624.26 L851.51 624.26 L851.51 627.16" fill="none" stroke="#4040ff" stroke-width="1.0" stroke-linejoin="round"/><rect x="585" y="568" width="270.0" height="87.0" fill="none" stroke="#7d7d7d" stroke-width="2"/><text x="585.90" y="668.90" font-size="10.67" fill="#545454" text-anchor="middle">0</text><text x="627.39" y="668.90" font-size="10.67" fill="#545454" text-anchor="middle">20</text><text x="668.87" y="668.90" font-size="10.67" fill="#545454" text-anchor="middle">40</text><text x="710.36" y="668.90" font-size="10.67" fill="#545454" text-anchor="middle">60</text><text x="751.84" y="668.90" font-size="10.67" fill="#545454" text-anchor="middle">80</text><text x="793.33" y="668.90" font-size="10.67" fill="#545454" text-anchor="middle">100</text><text x="834.82" y="668.90" font-size="10.67" fill="#545454" text-anchor="middle">120</text><text x="580.70" y="658.20" font-size="10.67" fill="#545454" text-anchor="end">0</text><text x="580.70" y="638.81" font-size="10.67" fill="#545454" text-anchor="end">5</text><text x="580.70" y="619.42" font-size="10.67" fill="#545454" text-anchor="end">10</text><text x="580.70" y="600.04" font-size="10.67" fill="#545454" text-anchor="end">15</text><text x="580.70" y="580.65" font-size="10.67" fill="#545454" text-anchor="end">20</text><path d="M842 569 L852 559 L862 569 L852 579 Z" fill="#ff0000"/></svg>
<svg class="a" style="left:1032px;top:555px" width="312" height="119" viewBox="1032 555 312 119"><rect x="1102.64" y="569" width="1.3" height="85.0" fill="#ebebeb"/><rect x="1144.12" y="569" width="1.3" height="85.0" fill="#ebebeb"/><rect x="1185.61" y="569" width="1.3" height="85.0" fill="#ebebeb"/><rect x="1227.09" y="569" width="1.3" height="85.0" fill="#ebebeb"/><rect x="1268.58" y="569" width="1.3" height="85.0" fill="#ebebeb"/><rect x="1310.07" y="569" width="1.3" height="85.0" fill="#ebebeb"/><rect x="1062" y="634.46" width="268.0" height="1.3" fill="#e6e6e6"/><rect x="1062" y="615.07" width="268.0" height="1.3" fill="#e6e6e6"/><rect x="1062" y="595.69" width="268.0" height="1.3" fill="#e6e6e6"/><rect x="1062" y="576.30" width="268.0" height="1.3" fill="#e6e6e6"/><rect x="1240.70" y="576.70" width="13.6" height="10.6" fill="#fff" stroke="#ccc" stroke-width="1"/><rect x="1242.00" y="578.00" width="11" height="8" fill="#0000ff"/><text x="1324.40" y="585.60" font-size="11.35" fill="#8f8f8f" text-anchor="end">aida11 Stat</text><path d="M1062.00 654.50 L1064.07 654.50 L1064.07 579.91 L1066.15 579.91 L1066.15 576.54 L1068.22 576.54 L1068.22 582.44 L1070.30 582.44 L1070.30 582.29 L1072.37 582.29 L1072.37 581.22 L1074.45 581.22 L1074.45 586.30 L1076.52 586.30 L1076.52 582.27 L1078.59 582.27 L1078.59 583.46 L1080.67 583.46 L1080.67 586.16 L1082.74 586.16 L1082.74 589.70 L1084.82 589.70 L1084.82 586.73 L1086.89 586.73 L1086.89 588.61 L1088.97 588.61 L1088.97 590.59 L1091.04 590.59 L1091.04 591.99 L1093.11 591.99 L1093.11 590.65 L1095.19 590.65 L1095.19 593.16 L1097.26 593.16 L1097.26 617.88 L1099.34 617.88 L1099.34 617.83 L1101.41 617.83 L1101.41 617.66 L1103.49 617.66 L1103.49 617.87 L1105.56 617.87 L1105.56 617.85 L1107.63 617.85 L1107.63 617.82 L1109.71 617.82 L1109.71 618.00 L1111.78 618.00 L1111.78 617.85 L1113.86 617.85 L1113.86 617.80 L1115.93 617.80 L1115.93 617.72 L1118.01 617.72 L1118.01 618.05 L1120.08 618.05 L1120.08 617.95 L1122.15 617.95 L1122.15 617.23 L1124.23 617.23 L1124.23 616.90 L1126.30 616.90 L1126.30 616.95 L1128.38 616.95 L1128.38 617.26 L1130.45 617.26 L1130.45 589.06 L1132.53 589.06 L1132.53 592.12 L1134.60 592.12 L1134.60 588.74 L1136.67 588.74 L1136.67 592.80 L1138.75 592.80 L1138.75 591.29 L1140.82 591.29 L1140.82 591.28 L1142.90 591.28 L1142.90 592.44 L1144.97 592.44 L1144.97 594.18 L1147.05 594.18 L1147.05 592.18 L1149.12 592.18 L1149.12 594.65 L1151.20 594.65 L1151.20 593.36 L1153.27 593.36 L1153.27 594.57 L1155.34 594.57 L1155.34 594.65 L1157.42 594.65 L1157.42 594.66 L1159.49 594.66 L1159.49 593.30 L1161.57 593.30 L1161.57 594.47 L1163.64 594.47 L1163.64 616.82 L1165.72 616.82 L1165.72 616.83 L1167.79 616.83 L1167.79 616.97 L1169.86 616.97 L1169.86 616.99 L1171.94 616.99 L1171.94 617.20 L1174.01 617.20 L1174.01 617.27 L1176.09 617.27 L1176.09 617.03 L1178.16 617.03 L1178.16 617.25 L1180.24 617.25 L1180.24 617.19 L1182.31 617.19 L1182.31 617.16 L1184.38 617.16 L1184.38 617.26 L1186.46 617.26 L1186.46 617.06 L1188.53 617.06 L1188.53 617.07 L1190.61 617.07 L1190.61 616.88 L1192.68 616.88 L1192.68 617.03 L1194.76 617.03 L1194.76 616.98 L1196.83 616.98 L1196.83 592.56 L1198.90 592.56 L1198.90 590.41 L1200.98 590.41 L1200.98 595.26 L1203.05 595.26 L1203.05 591.38 L1205.13 591.38 L1205.13 588.49 L1207.20 588.49 L1207.20 593.71 L1209.28 593.71 L1209.28 592.03 L1211.35 592.03 L1211.35 592.17 L1213.42 592.17 L1213.42 594.64 L1215.50 594.64 L1215.50 595.56 L1217.57 595.56 L1217.57 595.59 L1219.65 595.59 L1219.65 589.46 L1221.72 589.46 L1221.72 593.19 L1223.80 593.19 L1223.80 590.65 L1225.87 590.65 L1225.87 594.19 L1227.94 594.19 L1227.94 594.32 L1230.02 594.32 L1230.02 616.89 L1232.09 616.89 L1232.09 616.81 L1234.17 616.81 L1234.17 616.91 L1236.24 616.91 L1236.24 616.99 L1238.32 616.99 L1238.32 619.18 L1240.39 619.18 L1240.39 617.43 L1242.46 617.43 L1242.46 617.50 L1244.54 617.50 L1244.54 617.57 L1246.61 617.57 L1246.61 621.43 L1248.69 621.43 L1248.69 620.31 L1250.76 620.31 L1250.76 620.28 L1252.84 620.28 L1252.84 622.32 L1254.91 622.32 L1254.91 622.97 L1256.98 622.97 L1256.98 622.17 L1259.06 622.17 L1259.06 621.19 L1261.13 621.19 L1261.13 622.76 L1263.21 622.76 L1263.21 579.56 L1265.28 579.56 L1265.28 591.33 L1267.36 591.33 L1267.36 591.35 L1269.43 591.35 L1269.43 592.44 L1271.50 592.44 L1271.50 592.33 L1273.58 592.33 L1273.58 590.83 L1275.65 590.83 L1275.65 590.90 L1277.73 590.90 L1277.73 575.69 L1279.80 575.69 L1279.80 592.16 L1281.88 592.16 L1281.88 594.15 L1283.95 594.15 L1283.95 585.74 L1286.02 585.74 L1286.02 588.46 L1288.10 588.46 L1288.10 592.84 L1290.17 592.84 L1290.17 576.54 L1292.25 576.54 L1292.25 591.33 L1294.32 591.33 L1294.32 591.31 L1296.40 591.31 L1296.40 622.70 L1298.47 622.70 L1298.47 622.70 L1300.54 622.70 L1300.54 623.48 L1302.62 623.48 L1302.62 623.48 L1304.69 623.48 L1304.69 623.48 L1306.77 623.48 L1306.77 625.03 L1308.84 625.03 L1308.84 626.39 L1310.92 626.39 L1310.92 628.33 L1312.99 628.33 L1312.99 625.03 L1315.07 625.03 L1315.07 628.33 L1317.14 628.33 L1317.14 627.16 L1319.21 627.16 L1319.21 623.87 L1321.29 623.87 L1321.29 625.42 L1323.36 625.42 L1323.36 628.13 L1325.44 628.13 L1325.44 622.70 L1327.51 622.70 L1327.51 628.13" fill="none" stroke="#4040ff" stroke-width="1.0" stroke-linejoin="round"/><rect x="1061" y="568" width="270.0" height="87.0" fill="none" stroke="#7d7d7d" stroke-width="2"/><text x="1062.90" y="668.90" font-size="10.67" fill="#545454" text-anchor="middle">0</text><text x="1104.39" y="668.90" font-size="10.67" fill="#545454" text-anchor="middle">20</text><text x="1145.87" y="668.90" font-size="10.67" fill="#545454" text-anchor="middle">40</text><text x="1187.36" y="668.90" font-size="10.67" fill="#545454" text-anchor="middle">60</text><text x="1228.84" y="668.90" font-size="10.67" fill="#545454" text-anchor="middle">80</text><text x="1270.33" y="668.90" font-size="10.67" fill="#545454" text-anchor="middle">100</text><text x="1311.82" y="668.90" font-size="10.67" fill="#545454" text-anchor="middle">120</text><text x="1057.70" y="658.20" font-size="10.67" fill="#545454" text-anchor="end">0</text><text x="1057.70" y="638.81" font-size="10.67" fill="#545454" text-anchor="end">5</text><text x="1057.70" y="619.42" font-size="10.67" fill="#545454" text-anchor="end">10</text><text x="1057.70" y="600.04" font-size="10.67" fill="#545454" text-anchor="end">15</text><text x="1057.70" y="580.65" font-size="10.67" fill="#545454" text-anchor="end">20</text><path d="M1318 569 L1328 559 L1338 569 L1328 579 Z" fill="#ff0000"/></svg>
<svg class="a" style="left:1508px;top:555px" width="312" height="119" viewBox="1508 555 312 119"><rect x="1578.64" y="569" width="1.3" height="85.0" fill="#d9d9d9"/><rect x="1620.12" y="569" width="1.3" height="85.0" fill="#d9d9d9"/><rect x="1661.61" y="569" width="1.3" height="85.0" fill="#d9d9d9"/><rect x="1703.09" y="569" width="1.3" height="85.0" fill="#d9d9d9"/><rect x="1744.58" y="569" width="1.3" height="85.0" fill="#d9d9d9"/><rect x="1786.07" y="569" width="1.3" height="85.0" fill="#d9d9d9"/><rect x="1538" y="634.46" width="268.0" height="1.3" fill="#dadada"/><rect x="1538" y="615.07" width="268.0" height="1.3" fill="#dadada"/><rect x="1538" y="595.69" width="268.0" height="1.3" fill="#dadada"/><rect x="1538" y="576.30" width="268.0" height="1.3" fill="#dadada"/><rect x="1716.70" y="576.70" width="13.6" height="10.6" fill="#fff" stroke="#ccc" stroke-width="1"/><rect x="1718.00" y="578.00" width="11" height="8" fill="#0000ff"/><text x="1800.40" y="585.60" font-size="11.35" fill="#000000" text-anchor="end">aida12 Stat</text><path d="M1538.00 654.50 L1540.07 654.50 L1540.07 577.34 L1542.15 577.34 L1542.15 575.77 L1544.22 575.77 L1544.22 578.61 L1546.30 578.61 L1546.30 579.91 L1548.37 579.91 L1548.37 577.77 L1550.45 577.77 L1550.45 581.36 L1552.52 581.36 L1552.52 581.41 L1554.59 581.41 L1554.59 580.86 L1556.67 580.86 L1556.67 582.02 L1558.74 582.02 L1558.74 583.20 L1560.82 583.20 L1560.82 582.27 L1562.89 582.27 L1562.89 581.57 L1564.97 581.57 L1564.97 583.63 L1567.04 583.63 L1567.04 582.52 L1569.11 582.52 L1569.11 582.53 L1571.19 582.53 L1571.19 583.78 L1573.26 583.78 L1573.26 618.68 L1575.34 618.68 L1575.34 618.60 L1577.41 618.60 L1577.41 618.59 L1579.49 618.59 L1579.49 618.84 L1581.56 618.84 L1581.56 618.90 L1583.63 618.90 L1583.63 618.73 L1585.71 618.73 L1585.71 618.78 L1587.78 618.78 L1587.78 617.71 L1589.86 617.71 L1589.86 617.77 L1591.93 617.77 L1591.93 617.81 L1594.01 617.81 L1594.01 617.83 L1596.08 617.83 L1596.08 617.78 L1598.15 617.78 L1598.15 618.02 L1600.23 618.02 L1600.23 617.89 L1602.30 617.89 L1602.30 618.01 L1604.38 618.01 L1604.38 617.67 L1606.45 617.67 L1606.45 580.84 L1608.53 580.84 L1608.53 581.70 L1610.60 581.70 L1610.60 583.09 L1612.67 583.09 L1612.67 580.88 L1614.75 580.88 L1614.75 581.66 L1616.82 581.66 L1616.82 580.70 L1618.90 580.70 L1618.90 581.65 L1620.97 581.65 L1620.97 581.47 L1623.05 581.47 L1623.05 582.54 L1625.12 582.54 L1625.12 583.28 L1627.20 583.28 L1627.20 581.57 L1629.27 581.57 L1629.27 581.69 L1631.34 581.69 L1631.34 582.51 L1633.42 582.51 L1633.42 581.28 L1635.49 581.28 L1635.49 581.82 L1637.57 581.82 L1637.57 581.90 L1639.64 581.90 L1639.64 618.88 L1641.72 618.88 L1641.72 618.52 L1643.79 618.52 L1643.79 618.87 L1645.86 618.87 L1645.86 618.58 L1647.94 618.58 L1647.94 618.75 L1650.01 618.75 L1650.01 618.72 L1652.09 618.72 L1652.09 618.51 L1654.16 618.51 L1654.16 618.90 L1656.24 618.90 L1656.24 618.88 L1658.31 618.88 L1658.31 618.48 L1660.38 618.48 L1660.38 618.67 L1662.46 618.67 L1662.46 618.86 L1664.53 618.86 L1664.53 618.44 L1666.61 618.44 L1666.61 619.28 L1668.68 619.28 L1668.68 619.67 L1670.76 619.67 L1670.76 619.52 L1672.83 619.52 L1672.83 580.17 L1674.90 580.17 L1674.90 581.44 L1676.98 581.44 L1676.98 580.76 L1679.05 580.76 L1679.05 580.66 L1681.13 580.66 L1681.13 584.80 L1683.20 584.80 L1683.20 582.44 L1685.28 582.44 L1685.28 583.56 L1687.35 583.56 L1687.35 583.65 L1689.42 583.65 L1689.42 583.58 L1691.50 583.58 L1691.50 583.66 L1693.57 583.66 L1693.57 585.36 L1695.65 585.36 L1695.65 585.25 L1697.72 585.25 L1697.72 584.48 L1699.80 584.48 L1699.80 584.64 L1701.87 584.64 L1701.87 584.51 L1703.94 584.51 L1703.94 582.40 L1706.02 582.40 L1706.02 619.66 L1708.09 619.66 L1708.09 619.57 L1710.17 619.57 L1710.17 619.43 L1712.24 619.43 L1712.24 619.64 L1714.32 619.64 L1714.32 619.39 L1716.39 619.39 L1716.39 619.69 L1718.46 619.69 L1718.46 619.64 L1720.54 619.64 L1720.54 619.34 L1722.61 619.34 L1722.61 620.35 L1724.69 620.35 L1724.69 620.34 L1726.76 620.34 L1726.76 620.26 L1728.84 620.26 L1728.84 621.36 L1730.91 621.36 L1730.91 621.40 L1732.98 621.40 L1732.98 620.52 L1735.06 620.52 L1735.06 620.19 L1737.13 620.19 L1737.13 624.04 L1739.21 624.04 L1739.21 584.15 L1741.28 584.15 L1741.28 584.22 L1743.36 584.22 L1743.36 584.15 L1745.43 584.15 L1745.43 584.23 L1747.50 584.23 L1747.50 584.07 L1749.58 584.07 L1749.58 584.08 L1751.65 584.08 L1751.65 584.09 L1753.73 584.09 L1753.73 576.00 L1755.80 576.00 L1755.80 583.80 L1757.88 583.80 L1757.88 583.96 L1759.95 583.96 L1759.95 584.01 L1762.02 584.01 L1762.02 586.68 L1764.10 586.68 L1764.10 581.10 L1766.17 581.10 L1766.17 577.62 L1768.25 577.62 L1768.25 587.35 L1770.32 587.35 L1770.32 583.03 L1772.40 583.03 L1772.40 623.09 L1774.47 623.09 L1774.47 622.32 L1776.54 622.32 L1776.54 624.64 L1778.62 624.64 L1778.62 624.64 L1780.69 624.64 L1780.69 624.64 L1782.77 624.64 L1782.77 626.39 L1784.84 626.39 L1784.84 628.91 L1786.92 628.91 L1786.92 632.20 L1788.99 632.20 L1788.99 626.00 L1791.07 626.00 L1791.07 629.30 L1793.14 629.30 L1793.14 631.43 L1795.21 631.43 L1795.21 625.42 L1797.29 625.42 L1797.29 628.33 L1799.36 628.33 L1799.36 631.04 L1801.44 631.04 L1801.44 624.64 L1803.51 624.64 L1803.51 631.04" fill="none" stroke="#4040ff" stroke-width="1.0" stroke-linejoin="round"/><rect x="1537" y="568" width="270.0" height="87.0" fill="none" stroke="#000000" stroke-width="2"/><text x="1538.90" y="668.90" font-size="10.67" fill="#545454" text-anchor="middle">0</text><text x="1580.39" y="668.90" font-size="10.67" fill="#545454" text-anchor="middle">20</text><text x="1621.87" y="668.90" font-size="10.67" fill="#545454" text-anchor="middle">40</text><text x="1663.36" y="668.90" font-size="10.67" fill="#545454" text-anchor="middle">60</text><text x="1704.84" y="668.90" font-size="10.67" fill="#545454" text-anchor="middle">80</text><text x="1746.33" y="668.90" font-size="10.67" fill="#545454" text-anchor="middle">100</text><text x="1787.82" y="668.90" font-size="10.67" fill="#545454" text-anchor="middle">120</text><text x="1533.70" y="658.20" font-size="10.67" fill="#545454" text-anchor="end">0</text><text x="1533.70" y="638.81" font-size="10.67" fill="#545454" text-anchor="end">5</text><text x="1533.70" y="619.42" font-size="10.67" fill="#545454" text-anchor="end">10</text><text x="1533.70" y="600.04" font-size="10.67" fill="#545454" text-anchor="end">15</text><text x="1533.70" y="580.65" font-size="10.67" fill="#545454" text-anchor="end">20</text><path d="M1794 569 L1804 559 L1814 569 L1804 579 Z" fill="#00ff00"/></svg>
<div class="btn" style="left:2px;top:810px;width:155px;height:23px"><span>Empty Log Window</span></div>
<div class="btn" style="left:161px;top:810px;width:193px;height:23px"><span>Send Log Window to ELog</span></div>
<div class="btn" style="left:358px;top:810px;width:86px;height:23px"><span>Reload</span></div>
<div class="btn" style="left:448px;top:810px;width:79px;height:23px"><span>Reset</span></div>
<div class="btn" style="left:531px;top:810px;width:132px;height:23px"><span>Show Variables</span></div>
<div class="btn" style="left:667px;top:810px;width:149px;height:23px"><span>Show Log Window</span></div>
<div class="btn" style="left:820px;top:810px;width:133px;height:23px"><span>Enable Logging</span></div>
<div class="btn" style="left:1744px;top:810px;width:166px;height:23px"><span>How to use this page</span></div>
<div class="t" style="right:2.5px;top:845.70px">Last Updated: March 11, 2020 02:32:18</div>
<div class="hr" style="top:875px"></div>
</body></html>
